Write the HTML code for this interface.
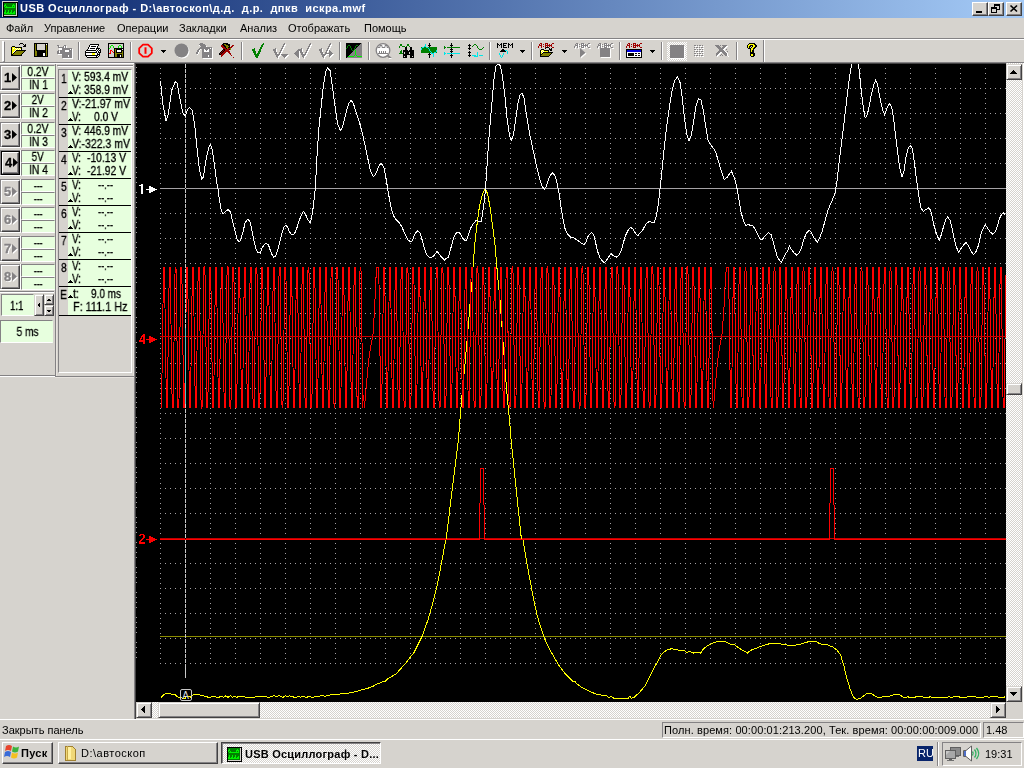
<!DOCTYPE html><html><head><meta charset="utf-8"><style>
*{box-sizing:border-box;margin:0;padding:0}
html,body{width:1024px;height:768px;overflow:hidden;background:#d6d3ce}
body{position:relative;font-family:"Liberation Sans",sans-serif;font-size:11px;color:#000}
.a{position:absolute}
.t{position:absolute;white-space:nowrap;line-height:1;will-change:transform}
#title{left:0;top:0;width:1024px;height:18px;background:linear-gradient(to right,#08246b 0%,#a5cbf7 100%)}
.cap{position:absolute;top:2px;height:14px;background:#d6d3ce;border:1px solid;border-color:#fff #424142 #424142 #fff;box-shadow:inset -1px -1px 0 #848284}
.hl{position:absolute;height:1px}
.vl{position:absolute;width:1px}
.btn{position:absolute;background:#d6d3ce;border:1px solid;border-color:#fff #424142 #424142 #fff;box-shadow:inset -1px -1px 0 #848284}
.sbtn{position:absolute;background:#d6d3ce;border:1px solid;border-color:#d6d3ce #424142 #424142 #d6d3ce;box-shadow:inset 1px 1px 0 #fff,inset -1px -1px 0 #848284}
.sunk{position:absolute;border:1px solid;border-color:#848284 #fff #fff #848284}
.gc{position:absolute;background:#e7ffde;border:1px solid;border-color:#848284 #e7ffde #fff #848284;text-align:center;font-size:11px;line-height:10px}
.chk{background:repeating-conic-gradient(#fff 0% 25%,#d6d3ce 0% 50%) 0 0/2px 2px}
.sep{position:absolute;top:42px;width:2px;height:18px;border-left:1px solid #848284;border-right:1px solid #fff}
svg{position:absolute;overflow:visible}
</style></head><body><div id="title" class="a"></div>
<svg style="left:0;top:0" width="20" height="18" shape-rendering="crispEdges"><rect x="2" y="1" width="16" height="1" fill="#d6d3ce"/><rect x="2" y="2" width="1" height="1" fill="#d6d3ce"/><rect x="3" y="2" width="15" height="1" fill="#000"/><rect x="2" y="3" width="1" height="1" fill="#d6d3ce"/><rect x="3" y="3" width="1" height="1" fill="#000"/><rect x="4" y="3" width="12" height="1" fill="#008000"/><rect x="16" y="3" width="1" height="1" fill="#d6d3ce"/><rect x="17" y="3" width="1" height="1" fill="#000"/><rect x="2" y="4" width="1" height="1" fill="#d6d3ce"/><rect x="3" y="4" width="1" height="1" fill="#000"/><rect x="4" y="4" width="1" height="1" fill="#008000"/><rect x="5" y="4" width="1" height="1" fill="#00f000"/><rect x="6" y="4" width="7" height="1" fill="#008000"/><rect x="13" y="4" width="1" height="1" fill="#00f000"/><rect x="14" y="4" width="2" height="1" fill="#008000"/><rect x="16" y="4" width="1" height="1" fill="#d6d3ce"/><rect x="17" y="4" width="1" height="1" fill="#000"/><rect x="2" y="5" width="1" height="1" fill="#d6d3ce"/><rect x="3" y="5" width="1" height="1" fill="#000"/><rect x="4" y="5" width="2" height="1" fill="#00f000"/><rect x="6" y="5" width="6" height="1" fill="#008000"/><rect x="12" y="5" width="3" height="1" fill="#00f000"/><rect x="15" y="5" width="1" height="1" fill="#008000"/><rect x="16" y="5" width="1" height="1" fill="#d6d3ce"/><rect x="17" y="5" width="1" height="1" fill="#000"/><rect x="2" y="6" width="1" height="1" fill="#d6d3ce"/><rect x="3" y="6" width="1" height="1" fill="#000"/><rect x="4" y="6" width="1" height="1" fill="#00f000"/><rect x="5" y="6" width="1" height="1" fill="#008000"/><rect x="6" y="6" width="1" height="1" fill="#00f000"/><rect x="7" y="6" width="5" height="1" fill="#008000"/><rect x="12" y="6" width="1" height="1" fill="#00f000"/><rect x="13" y="6" width="1" height="1" fill="#008000"/><rect x="14" y="6" width="1" height="1" fill="#00f000"/><rect x="15" y="6" width="1" height="1" fill="#008000"/><rect x="16" y="6" width="1" height="1" fill="#d6d3ce"/><rect x="17" y="6" width="1" height="1" fill="#000"/><rect x="2" y="7" width="1" height="1" fill="#d6d3ce"/><rect x="3" y="7" width="1" height="1" fill="#000"/><rect x="4" y="7" width="1" height="1" fill="#008000"/><rect x="5" y="7" width="10" height="1" fill="#00f000"/><rect x="15" y="7" width="1" height="1" fill="#008000"/><rect x="16" y="7" width="1" height="1" fill="#d6d3ce"/><rect x="17" y="7" width="1" height="1" fill="#000"/><rect x="2" y="8" width="1" height="1" fill="#d6d3ce"/><rect x="3" y="8" width="1" height="1" fill="#000"/><rect x="4" y="8" width="12" height="1" fill="#008000"/><rect x="16" y="8" width="1" height="1" fill="#d6d3ce"/><rect x="17" y="8" width="1" height="1" fill="#000"/><rect x="2" y="9" width="1" height="1" fill="#d6d3ce"/><rect x="3" y="9" width="1" height="1" fill="#000"/><rect x="4" y="9" width="12" height="1" fill="#008000"/><rect x="16" y="9" width="1" height="1" fill="#d6d3ce"/><rect x="17" y="9" width="1" height="1" fill="#000"/><rect x="2" y="10" width="1" height="1" fill="#d6d3ce"/><rect x="3" y="10" width="1" height="1" fill="#000"/><rect x="4" y="10" width="1" height="1" fill="#008000"/><rect x="5" y="10" width="1" height="1" fill="#00f000"/><rect x="6" y="10" width="2" height="1" fill="#008000"/><rect x="8" y="10" width="1" height="1" fill="#00f000"/><rect x="9" y="10" width="2" height="1" fill="#008000"/><rect x="11" y="10" width="1" height="1" fill="#00f000"/><rect x="12" y="10" width="4" height="1" fill="#008000"/><rect x="16" y="10" width="1" height="1" fill="#d6d3ce"/><rect x="17" y="10" width="1" height="1" fill="#000"/><rect x="2" y="11" width="1" height="1" fill="#d6d3ce"/><rect x="3" y="11" width="1" height="1" fill="#000"/><rect x="4" y="11" width="1" height="1" fill="#008000"/><rect x="5" y="11" width="1" height="1" fill="#00f000"/><rect x="6" y="11" width="2" height="1" fill="#008000"/><rect x="8" y="11" width="1" height="1" fill="#00f000"/><rect x="9" y="11" width="2" height="1" fill="#008000"/><rect x="11" y="11" width="1" height="1" fill="#00f000"/><rect x="12" y="11" width="2" height="1" fill="#008000"/><rect x="14" y="11" width="1" height="1" fill="#00f000"/><rect x="15" y="11" width="1" height="1" fill="#008000"/><rect x="16" y="11" width="1" height="1" fill="#d6d3ce"/><rect x="17" y="11" width="1" height="1" fill="#000"/><rect x="2" y="12" width="1" height="1" fill="#d6d3ce"/><rect x="3" y="12" width="1" height="1" fill="#000"/><rect x="4" y="12" width="2" height="1" fill="#00f000"/><rect x="6" y="12" width="1" height="1" fill="#008000"/><rect x="7" y="12" width="2" height="1" fill="#00f000"/><rect x="9" y="12" width="1" height="1" fill="#008000"/><rect x="10" y="12" width="2" height="1" fill="#00f000"/><rect x="12" y="12" width="1" height="1" fill="#008000"/><rect x="13" y="12" width="2" height="1" fill="#00f000"/><rect x="15" y="12" width="1" height="1" fill="#008000"/><rect x="16" y="12" width="1" height="1" fill="#d6d3ce"/><rect x="17" y="12" width="1" height="1" fill="#000"/><rect x="2" y="13" width="1" height="1" fill="#d6d3ce"/><rect x="3" y="13" width="1" height="1" fill="#000"/><rect x="4" y="13" width="11" height="1" fill="#00f000"/><rect x="15" y="13" width="1" height="1" fill="#008000"/><rect x="16" y="13" width="1" height="1" fill="#d6d3ce"/><rect x="17" y="13" width="1" height="1" fill="#000"/><rect x="2" y="14" width="1" height="1" fill="#d6d3ce"/><rect x="3" y="14" width="1" height="1" fill="#000"/><rect x="4" y="14" width="12" height="1" fill="#008000"/><rect x="16" y="14" width="1" height="1" fill="#d6d3ce"/><rect x="17" y="14" width="1" height="1" fill="#000"/><rect x="2" y="15" width="1" height="1" fill="#d6d3ce"/><rect x="3" y="15" width="1" height="1" fill="#000"/><rect x="4" y="15" width="13" height="1" fill="#d6d3ce"/><rect x="17" y="15" width="1" height="1" fill="#000"/><rect x="2" y="16" width="1" height="1" fill="#d6d3ce"/><rect x="3" y="16" width="15" height="1" fill="#000"/></svg>
<div class="t" style="left:20px;top:3px;color:#fff;font-weight:bold;font-size:11px;letter-spacing:0.46px" id="ttl">USB Осциллограф - D:\автоскоп\д.д.&nbsp; д.р.&nbsp; дпкв&nbsp; искра.mwf</div>
<div class="cap" style="left:972px;width:16px"></div><div class="cap" style="left:988px;width:16px"></div><div class="cap" style="left:1006px;width:16px"></div>
<svg style="left:972px;top:2px" width="50" height="14" shape-rendering="crispEdges">
<rect x="4" y="9" width="6" height="2" fill="#000"/>
<rect x="22.500" y="2.500" width="5" height="5" fill="none" stroke="#000"/><rect x="22" y="2" width="6" height="2" fill="#000"/>
<rect x="19.500" y="5.500" width="5" height="5" fill="#d6d3ce" stroke="#000"/><rect x="19" y="5" width="6" height="2" fill="#000"/>
<path d="M38.500 3.500l6.500 6M45 3.500l-6.500 6" stroke="#000" stroke-width="1.700" shape-rendering="auto"/>
</svg>
<div class="t mn" id="mn0" style="left:5.5px;top:23px;font-size:11px">Файл</div>
<div class="t mn" id="mn1" style="left:43.7px;top:23px;font-size:11px">Управление</div>
<div class="t mn" id="mn2" style="left:116.9px;top:23px;font-size:11px">Операции</div>
<div class="t mn" id="mn3" style="left:178.8px;top:23px;font-size:11px">Закладки</div>
<div class="t mn" id="mn4" style="left:239.5px;top:23px;font-size:11px">Анализ</div>
<div class="t mn" id="mn5" style="left:287.5px;top:23px;font-size:11px">Отображать</div>
<div class="t mn" id="mn6" style="left:363.5px;top:23px;font-size:11px">Помощь</div>
<div class="hl" style="left:0;top:38px;width:1024px;background:#848284"></div>
<div class="hl" style="left:0;top:39px;width:1024px;background:#fff"></div>
<div class="a" style="left:2px;top:41px;width:3px;height:21px;border:1px solid;border-color:#fff #848284 #848284 #fff;border-left-width:2px;width:3px"></div>
<div class="sep" style="left:78px"></div>
<div class="sep" style="left:130px"></div>
<div class="sep" style="left:241px"></div>
<div class="sep" style="left:339px"></div>
<div class="sep" style="left:368px"></div>
<div class="sep" style="left:489px"></div>
<div class="sep" style="left:531px"></div>
<div class="sep" style="left:619px"></div>
<div class="sep" style="left:661px"></div>
<div class="sep" style="left:736px"></div>
<div class="a chk" style="left:667px;top:42px;width:20px;height:19px"></div>
<div class="vl" style="left:763px;top:40px;height:22px;background:#848284"></div><div class="vl" style="left:764px;top:40px;height:22px;background:#fff"></div>
<svg style="left:0;top:0" width="1024" height="64" viewBox="0 0 1024 64" shape-rendering="crispEdges"><rect x="20" y="43" width="3" height="1" fill="#000"/><rect x="19" y="44" width="1" height="1" fill="#000"/><rect x="23" y="44" width="1" height="1" fill="#000"/><rect x="25" y="44" width="1" height="1" fill="#000"/><rect x="24" y="45" width="2" height="1" fill="#000"/><rect x="12" y="46" width="3" height="1" fill="#000"/><rect x="23" y="46" width="3" height="1" fill="#000"/><rect x="11" y="47" width="1" height="1" fill="#000"/><rect x="12" y="47" width="3" height="1" fill="#ffff00"/><rect x="15" y="47" width="7" height="1" fill="#000"/><rect x="11" y="48" width="1" height="1" fill="#000"/><rect x="12" y="48" width="1" height="1" fill="#ffff00"/><rect x="13" y="48" width="1" height="1" fill="#fff"/><rect x="14" y="48" width="1" height="1" fill="#ffff00"/><rect x="15" y="48" width="1" height="1" fill="#fff"/><rect x="16" y="48" width="1" height="1" fill="#ffff00"/><rect x="17" y="48" width="1" height="1" fill="#fff"/><rect x="18" y="48" width="1" height="1" fill="#ffff00"/><rect x="19" y="48" width="1" height="1" fill="#fff"/><rect x="20" y="48" width="1" height="1" fill="#ffff00"/><rect x="21" y="48" width="1" height="1" fill="#000"/><rect x="11" y="49" width="1" height="1" fill="#000"/><rect x="12" y="49" width="4" height="1" fill="#ffff00"/><rect x="16" y="49" width="1" height="1" fill="#fff"/><rect x="17" y="49" width="1" height="1" fill="#ffff00"/><rect x="18" y="49" width="1" height="1" fill="#fff"/><rect x="19" y="49" width="1" height="1" fill="#ffff00"/><rect x="20" y="49" width="1" height="1" fill="#fff"/><rect x="21" y="49" width="1" height="1" fill="#000"/><rect x="11" y="50" width="1" height="1" fill="#000"/><rect x="12" y="50" width="3" height="1" fill="#ffff00"/><rect x="15" y="50" width="1" height="1" fill="#fff"/><rect x="16" y="50" width="10" height="1" fill="#000"/><rect x="11" y="51" width="1" height="1" fill="#000"/><rect x="12" y="51" width="2" height="1" fill="#ffff00"/><rect x="14" y="51" width="1" height="1" fill="#fff"/><rect x="15" y="51" width="1" height="1" fill="#000"/><rect x="16" y="51" width="8" height="1" fill="#808000"/><rect x="24" y="51" width="1" height="1" fill="#000"/><rect x="11" y="52" width="1" height="1" fill="#000"/><rect x="12" y="52" width="1" height="1" fill="#ffff00"/><rect x="13" y="52" width="1" height="1" fill="#fff"/><rect x="14" y="52" width="1" height="1" fill="#000"/><rect x="15" y="52" width="8" height="1" fill="#808000"/><rect x="23" y="52" width="1" height="1" fill="#000"/><rect x="11" y="53" width="1" height="1" fill="#000"/><rect x="12" y="53" width="1" height="1" fill="#ffff00"/><rect x="13" y="53" width="1" height="1" fill="#000"/><rect x="14" y="53" width="8" height="1" fill="#808000"/><rect x="22" y="53" width="1" height="1" fill="#000"/><rect x="11" y="54" width="2" height="1" fill="#000"/><rect x="13" y="54" width="8" height="1" fill="#808000"/><rect x="21" y="54" width="1" height="1" fill="#000"/><rect x="11" y="55" width="11" height="1" fill="#000"/><g transform="translate(34,43)"><rect x="0" y="0" width="14" height="14" fill="#000"/><rect x="1" y="1" width="12" height="12" fill="#808000"/><rect x="3" y="1" width="8" height="6" fill="#d6d3ce" stroke="none"/><path d="M2.5 0.5v6.5h9v-6.5" fill="none" stroke="#000"/><rect x="3" y="8" width="9" height="5" fill="#000"/><rect x="9" y="10" width="2" height="3" fill="#fff"/><rect x="12" y="1" width="1" height="1" fill="#fff"/></g><rect x="57" y="45" width="2" height="1" fill="#848284"/><rect x="64" y="45" width="2" height="1" fill="#848284"/><rect x="58" y="46" width="1" height="1" fill="#848284"/><rect x="59" y="46" width="1" height="1" fill="#fff"/><rect x="63" y="46" width="1" height="1" fill="#848284"/><rect x="64" y="46" width="1" height="1" fill="#fff"/><rect x="65" y="46" width="1" height="1" fill="#848284"/><rect x="66" y="46" width="1" height="1" fill="#fff"/><rect x="58" y="47" width="6" height="1" fill="#848284"/><rect x="64" y="47" width="1" height="1" fill="#fff"/><rect x="65" y="47" width="1" height="1" fill="#848284"/><rect x="66" y="47" width="1" height="1" fill="#fff"/><rect x="59" y="48" width="3" height="1" fill="#fff"/><rect x="62" y="48" width="10" height="1" fill="#848284"/><rect x="59" y="49" width="3" height="1" fill="#fff"/><rect x="62" y="49" width="8" height="1" fill="#848284"/><rect x="70" y="49" width="1" height="1" fill="#fff"/><rect x="71" y="49" width="1" height="1" fill="#848284"/><rect x="72" y="49" width="1" height="1" fill="#fff"/><rect x="58" y="50" width="1" height="1" fill="#848284"/><rect x="60" y="50" width="5" height="1" fill="#848284"/><rect x="65" y="50" width="4" height="1" fill="#fff"/><rect x="69" y="50" width="3" height="1" fill="#848284"/><rect x="72" y="50" width="1" height="1" fill="#fff"/><rect x="57" y="51" width="2" height="1" fill="#848284"/><rect x="59" y="51" width="1" height="1" fill="#fff"/><rect x="60" y="51" width="5" height="1" fill="#848284"/><rect x="65" y="51" width="4" height="1" fill="#fff"/><rect x="69" y="51" width="3" height="1" fill="#848284"/><rect x="72" y="51" width="1" height="1" fill="#fff"/><rect x="57" y="52" width="2" height="1" fill="#848284"/><rect x="59" y="52" width="1" height="1" fill="#fff"/><rect x="60" y="52" width="12" height="1" fill="#848284"/><rect x="72" y="52" width="1" height="1" fill="#fff"/><rect x="57" y="53" width="15" height="1" fill="#848284"/><rect x="72" y="53" width="1" height="1" fill="#fff"/><rect x="58" y="54" width="4" height="1" fill="#fff"/><rect x="62" y="54" width="10" height="1" fill="#848284"/><rect x="72" y="54" width="1" height="1" fill="#fff"/><rect x="62" y="55" width="6" height="1" fill="#848284"/><rect x="68" y="55" width="1" height="1" fill="#fff"/><rect x="69" y="55" width="3" height="1" fill="#848284"/><rect x="72" y="55" width="1" height="1" fill="#fff"/><rect x="62" y="56" width="6" height="1" fill="#848284"/><rect x="68" y="56" width="1" height="1" fill="#fff"/><rect x="69" y="56" width="3" height="1" fill="#848284"/><rect x="72" y="56" width="1" height="1" fill="#fff"/><rect x="62" y="57" width="10" height="1" fill="#848284"/><rect x="72" y="57" width="1" height="1" fill="#fff"/><rect x="63" y="58" width="10" height="1" fill="#fff"/><rect x="90" y="44" width="9" height="1" fill="#000"/><rect x="89" y="45" width="1" height="1" fill="#000"/><rect x="90" y="45" width="8" height="1" fill="#fff"/><rect x="98" y="45" width="1" height="1" fill="#000"/><rect x="89" y="46" width="1" height="1" fill="#000"/><rect x="90" y="46" width="1" height="1" fill="#fff"/><rect x="91" y="46" width="5" height="1" fill="#000"/><rect x="96" y="46" width="1" height="1" fill="#fff"/><rect x="97" y="46" width="1" height="1" fill="#000"/><rect x="88" y="47" width="1" height="1" fill="#000"/><rect x="89" y="47" width="8" height="1" fill="#fff"/><rect x="97" y="47" width="1" height="1" fill="#000"/><rect x="88" y="48" width="1" height="1" fill="#000"/><rect x="89" y="48" width="1" height="1" fill="#fff"/><rect x="90" y="48" width="5" height="1" fill="#000"/><rect x="95" y="48" width="1" height="1" fill="#fff"/><rect x="96" y="48" width="4" height="1" fill="#000"/><rect x="87" y="49" width="1" height="1" fill="#000"/><rect x="88" y="49" width="8" height="1" fill="#fff"/><rect x="96" y="49" width="1" height="1" fill="#000"/><rect x="97" y="49" width="1" height="1" fill="#fff"/><rect x="98" y="49" width="1" height="1" fill="#000"/><rect x="99" y="49" width="1" height="1" fill="#fff"/><rect x="100" y="49" width="1" height="1" fill="#000"/><rect x="86" y="50" width="10" height="1" fill="#000"/><rect x="96" y="50" width="1" height="1" fill="#fff"/><rect x="97" y="50" width="1" height="1" fill="#000"/><rect x="98" y="50" width="1" height="1" fill="#fff"/><rect x="99" y="50" width="2" height="1" fill="#000"/><rect x="85" y="51" width="1" height="1" fill="#000"/><rect x="86" y="51" width="10" height="1" fill="#fff"/><rect x="96" y="51" width="1" height="1" fill="#000"/><rect x="97" y="51" width="1" height="1" fill="#fff"/><rect x="98" y="51" width="1" height="1" fill="#000"/><rect x="99" y="51" width="1" height="1" fill="#fff"/><rect x="100" y="51" width="1" height="1" fill="#000"/><rect x="85" y="52" width="12" height="1" fill="#000"/><rect x="97" y="52" width="1" height="1" fill="#fff"/><rect x="98" y="52" width="3" height="1" fill="#000"/><rect x="85" y="53" width="1" height="1" fill="#000"/><rect x="86" y="53" width="6" height="1" fill="#fff"/><rect x="92" y="53" width="3" height="1" fill="#ffff00"/><rect x="95" y="53" width="2" height="1" fill="#fff"/><rect x="97" y="53" width="1" height="1" fill="#000"/><rect x="98" y="53" width="1" height="1" fill="#fff"/><rect x="99" y="53" width="1" height="1" fill="#000"/><rect x="85" y="54" width="1" height="1" fill="#000"/><rect x="86" y="54" width="6" height="1" fill="#fff"/><rect x="92" y="54" width="3" height="1" fill="#ffff00"/><rect x="95" y="54" width="2" height="1" fill="#fff"/><rect x="97" y="54" width="3" height="1" fill="#000"/><rect x="85" y="55" width="13" height="1" fill="#000"/><rect x="98" y="55" width="1" height="1" fill="#fff"/><rect x="99" y="55" width="1" height="1" fill="#000"/><rect x="86" y="56" width="1" height="1" fill="#000"/><rect x="87" y="56" width="9" height="1" fill="#fff"/><rect x="96" y="56" width="1" height="1" fill="#000"/><rect x="97" y="56" width="1" height="1" fill="#fff"/><rect x="98" y="56" width="1" height="1" fill="#000"/><rect x="87" y="57" width="11" height="1" fill="#000"/><rect x="108" y="43" width="16" height="1" fill="#000"/><rect x="108" y="44" width="1" height="1" fill="#000"/><rect x="109" y="44" width="14" height="1" fill="#d6d3ce"/><rect x="123" y="44" width="1" height="1" fill="#000"/><rect x="108" y="45" width="1" height="1" fill="#000"/><rect x="109" y="45" width="2" height="1" fill="#d6d3ce"/><rect x="111" y="45" width="2" height="1" fill="#00f000"/><rect x="113" y="45" width="6" height="1" fill="#d6d3ce"/><rect x="119" y="45" width="2" height="1" fill="#00f000"/><rect x="121" y="45" width="2" height="1" fill="#d6d3ce"/><rect x="123" y="45" width="1" height="1" fill="#000"/><rect x="108" y="46" width="1" height="1" fill="#000"/><rect x="109" y="46" width="1" height="1" fill="#d6d3ce"/><rect x="110" y="46" width="1" height="1" fill="#00f000"/><rect x="111" y="46" width="2" height="1" fill="#d6d3ce"/><rect x="113" y="46" width="1" height="1" fill="#00f000"/><rect x="114" y="46" width="4" height="1" fill="#d6d3ce"/><rect x="118" y="46" width="1" height="1" fill="#00f000"/><rect x="119" y="46" width="2" height="1" fill="#d6d3ce"/><rect x="121" y="46" width="1" height="1" fill="#00f000"/><rect x="122" y="46" width="1" height="1" fill="#d6d3ce"/><rect x="123" y="46" width="1" height="1" fill="#000"/><rect x="108" y="47" width="1" height="1" fill="#000"/><rect x="109" y="47" width="1" height="1" fill="#d6d3ce"/><rect x="110" y="47" width="1" height="1" fill="#00f000"/><rect x="111" y="47" width="2" height="1" fill="#d6d3ce"/><rect x="113" y="47" width="1" height="1" fill="#00f000"/><rect x="114" y="47" width="4" height="1" fill="#d6d3ce"/><rect x="118" y="47" width="1" height="1" fill="#00f000"/><rect x="119" y="47" width="2" height="1" fill="#d6d3ce"/><rect x="121" y="47" width="1" height="1" fill="#00f000"/><rect x="122" y="47" width="1" height="1" fill="#d6d3ce"/><rect x="123" y="47" width="1" height="1" fill="#000"/><rect x="108" y="48" width="1" height="1" fill="#000"/><rect x="109" y="48" width="1" height="1" fill="#00f000"/><rect x="110" y="48" width="4" height="1" fill="#d6d3ce"/><rect x="114" y="48" width="10" height="1" fill="#000"/><rect x="108" y="49" width="1" height="1" fill="#000"/><rect x="109" y="49" width="5" height="1" fill="#d6d3ce"/><rect x="114" y="49" width="1" height="1" fill="#000"/><rect x="115" y="49" width="1" height="1" fill="#808000"/><rect x="116" y="49" width="6" height="1" fill="#000"/><rect x="122" y="49" width="1" height="1" fill="#fff"/><rect x="123" y="49" width="1" height="1" fill="#000"/><rect x="108" y="50" width="1" height="1" fill="#000"/><rect x="109" y="50" width="1" height="1" fill="#d6d3ce"/><rect x="110" y="50" width="2" height="1" fill="#ff0000"/><rect x="112" y="50" width="2" height="1" fill="#d6d3ce"/><rect x="114" y="50" width="1" height="1" fill="#000"/><rect x="115" y="50" width="1" height="1" fill="#808000"/><rect x="116" y="50" width="1" height="1" fill="#000"/><rect x="117" y="50" width="4" height="1" fill="#fff"/><rect x="121" y="50" width="3" height="1" fill="#000"/><rect x="108" y="51" width="1" height="1" fill="#000"/><rect x="109" y="51" width="1" height="1" fill="#d6d3ce"/><rect x="110" y="51" width="1" height="1" fill="#ff0000"/><rect x="111" y="51" width="1" height="1" fill="#d6d3ce"/><rect x="112" y="51" width="1" height="1" fill="#ff0000"/><rect x="113" y="51" width="1" height="1" fill="#d6d3ce"/><rect x="114" y="51" width="1" height="1" fill="#000"/><rect x="115" y="51" width="1" height="1" fill="#808000"/><rect x="116" y="51" width="1" height="1" fill="#000"/><rect x="117" y="51" width="4" height="1" fill="#fff"/><rect x="121" y="51" width="1" height="1" fill="#000"/><rect x="122" y="51" width="1" height="1" fill="#808000"/><rect x="123" y="51" width="1" height="1" fill="#000"/><rect x="108" y="52" width="1" height="1" fill="#000"/><rect x="109" y="52" width="1" height="1" fill="#d6d3ce"/><rect x="110" y="52" width="1" height="1" fill="#ff0000"/><rect x="111" y="52" width="2" height="1" fill="#d6d3ce"/><rect x="113" y="52" width="1" height="1" fill="#ff0000"/><rect x="114" y="52" width="1" height="1" fill="#000"/><rect x="115" y="52" width="1" height="1" fill="#808000"/><rect x="116" y="52" width="6" height="1" fill="#000"/><rect x="122" y="52" width="1" height="1" fill="#808000"/><rect x="123" y="52" width="1" height="1" fill="#000"/><rect x="108" y="53" width="1" height="1" fill="#000"/><rect x="109" y="53" width="2" height="1" fill="#ff0000"/><rect x="111" y="53" width="3" height="1" fill="#d6d3ce"/><rect x="114" y="53" width="1" height="1" fill="#000"/><rect x="115" y="53" width="8" height="1" fill="#808000"/><rect x="123" y="53" width="1" height="1" fill="#000"/><rect x="108" y="54" width="1" height="1" fill="#000"/><rect x="109" y="54" width="5" height="1" fill="#d6d3ce"/><rect x="114" y="54" width="1" height="1" fill="#000"/><rect x="115" y="54" width="2" height="1" fill="#808000"/><rect x="117" y="54" width="5" height="1" fill="#000"/><rect x="122" y="54" width="1" height="1" fill="#808000"/><rect x="123" y="54" width="1" height="1" fill="#000"/><rect x="108" y="55" width="1" height="1" fill="#000"/><rect x="109" y="55" width="5" height="1" fill="#d6d3ce"/><rect x="114" y="55" width="1" height="1" fill="#000"/><rect x="115" y="55" width="2" height="1" fill="#808000"/><rect x="117" y="55" width="3" height="1" fill="#000"/><rect x="120" y="55" width="1" height="1" fill="#fff"/><rect x="121" y="55" width="1" height="1" fill="#000"/><rect x="122" y="55" width="1" height="1" fill="#808000"/><rect x="123" y="55" width="1" height="1" fill="#000"/><rect x="108" y="56" width="1" height="1" fill="#000"/><rect x="109" y="56" width="5" height="1" fill="#d6d3ce"/><rect x="114" y="56" width="1" height="1" fill="#000"/><rect x="115" y="56" width="2" height="1" fill="#808000"/><rect x="117" y="56" width="3" height="1" fill="#000"/><rect x="120" y="56" width="1" height="1" fill="#fff"/><rect x="121" y="56" width="1" height="1" fill="#000"/><rect x="122" y="56" width="1" height="1" fill="#808000"/><rect x="123" y="56" width="1" height="1" fill="#000"/><rect x="108" y="57" width="16" height="1" fill="#000"/><g shape-rendering="auto"><path d="M143 44.700h5l3.800 3.600v4.800l-3.800 3.600h-5l-3.800-3.600v-4.800z" fill="none" stroke="#ff0000" stroke-width="1.800" stroke-linejoin="round"/><rect x="144.500" y="47.300" width="2" height="6.500" fill="#ff0000"/></g><path d="M161 50h5v1h-1v1h-1v1h-1v-1h-1v-1h-1z" fill="#000"/><g shape-rendering="auto"><circle cx="182.500" cy="51.500" r="7" fill="#fff"/><circle cx="181.500" cy="50.500" r="7" fill="#848284"/></g><rect x="200" y="43" width="3" height="1" fill="#848284"/><rect x="199" y="44" width="6" height="1" fill="#848284"/><rect x="199" y="45" width="1" height="1" fill="#fff"/><rect x="200" y="45" width="6" height="1" fill="#848284"/><rect x="201" y="46" width="5" height="1" fill="#848284"/><rect x="206" y="46" width="1" height="1" fill="#fff"/><rect x="200" y="47" width="12" height="1" fill="#848284"/><rect x="199" y="48" width="11" height="1" fill="#848284"/><rect x="210" y="48" width="1" height="1" fill="#fff"/><rect x="211" y="48" width="1" height="1" fill="#848284"/><rect x="212" y="48" width="1" height="1" fill="#fff"/><rect x="198" y="49" width="2" height="1" fill="#848284"/><rect x="200" y="49" width="1" height="1" fill="#fff"/><rect x="202" y="49" width="2" height="1" fill="#848284"/><rect x="204" y="49" width="1" height="1" fill="#fff"/><rect x="205" y="49" width="3" height="1" fill="#848284"/><rect x="208" y="49" width="1" height="1" fill="#fff"/><rect x="209" y="49" width="3" height="1" fill="#848284"/><rect x="212" y="49" width="1" height="1" fill="#fff"/><rect x="197" y="50" width="2" height="1" fill="#848284"/><rect x="199" y="50" width="1" height="1" fill="#fff"/><rect x="202" y="50" width="2" height="1" fill="#848284"/><rect x="204" y="50" width="2" height="1" fill="#fff"/><rect x="206" y="50" width="1" height="1" fill="#848284"/><rect x="207" y="50" width="2" height="1" fill="#fff"/><rect x="209" y="50" width="3" height="1" fill="#848284"/><rect x="212" y="50" width="1" height="1" fill="#fff"/><rect x="197" y="51" width="2" height="1" fill="#848284"/><rect x="199" y="51" width="1" height="1" fill="#fff"/><rect x="202" y="51" width="2" height="1" fill="#848284"/><rect x="204" y="51" width="5" height="1" fill="#fff"/><rect x="209" y="51" width="3" height="1" fill="#848284"/><rect x="212" y="51" width="1" height="1" fill="#fff"/><rect x="196" y="52" width="2" height="1" fill="#848284"/><rect x="198" y="52" width="1" height="1" fill="#fff"/><rect x="202" y="52" width="10" height="1" fill="#848284"/><rect x="212" y="52" width="1" height="1" fill="#fff"/><rect x="196" y="53" width="2" height="1" fill="#848284"/><rect x="198" y="53" width="1" height="1" fill="#fff"/><rect x="202" y="53" width="10" height="1" fill="#848284"/><rect x="212" y="53" width="1" height="1" fill="#fff"/><rect x="197" y="54" width="1" height="1" fill="#fff"/><rect x="202" y="54" width="10" height="1" fill="#848284"/><rect x="212" y="54" width="1" height="1" fill="#fff"/><rect x="202" y="55" width="6" height="1" fill="#848284"/><rect x="208" y="55" width="1" height="1" fill="#fff"/><rect x="209" y="55" width="3" height="1" fill="#848284"/><rect x="212" y="55" width="1" height="1" fill="#fff"/><rect x="202" y="56" width="6" height="1" fill="#848284"/><rect x="208" y="56" width="1" height="1" fill="#fff"/><rect x="209" y="56" width="3" height="1" fill="#848284"/><rect x="212" y="56" width="1" height="1" fill="#fff"/><rect x="202" y="57" width="10" height="1" fill="#848284"/><rect x="212" y="57" width="1" height="1" fill="#fff"/><rect x="203" y="58" width="10" height="1" fill="#fff"/><rect x="223" y="43" width="5" height="1" fill="#000"/><rect x="222" y="44" width="2" height="1" fill="#000"/><rect x="224" y="44" width="2" height="1" fill="#808000"/><rect x="226" y="44" width="4" height="1" fill="#000"/><rect x="221" y="45" width="2" height="1" fill="#a00000"/><rect x="223" y="45" width="2" height="1" fill="#000"/><rect x="225" y="45" width="3" height="1" fill="#808000"/><rect x="228" y="45" width="2" height="1" fill="#000"/><rect x="232" y="45" width="2" height="1" fill="#a00000"/><rect x="221" y="46" width="3" height="1" fill="#a00000"/><rect x="224" y="46" width="2" height="1" fill="#000"/><rect x="226" y="46" width="3" height="1" fill="#808000"/><rect x="229" y="46" width="1" height="1" fill="#000"/><rect x="231" y="46" width="2" height="1" fill="#a00000"/><rect x="222" y="47" width="3" height="1" fill="#a00000"/><rect x="225" y="47" width="1" height="1" fill="#000"/><rect x="226" y="47" width="2" height="1" fill="#808000"/><rect x="228" y="47" width="2" height="1" fill="#000"/><rect x="230" y="47" width="2" height="1" fill="#a00000"/><rect x="223" y="48" width="3" height="1" fill="#a00000"/><rect x="226" y="48" width="1" height="1" fill="#000"/><rect x="227" y="48" width="1" height="1" fill="#808000"/><rect x="228" y="48" width="2" height="1" fill="#a00000"/><rect x="230" y="48" width="1" height="1" fill="#808000"/><rect x="223" y="49" width="2" height="1" fill="#000"/><rect x="225" y="49" width="4" height="1" fill="#a00000"/><rect x="229" y="49" width="1" height="1" fill="#000"/><rect x="230" y="49" width="1" height="1" fill="#808000"/><rect x="222" y="50" width="1" height="1" fill="#000"/><rect x="223" y="50" width="1" height="1" fill="#a00000"/><rect x="224" y="50" width="1" height="1" fill="#000"/><rect x="225" y="50" width="4" height="1" fill="#a00000"/><rect x="221" y="51" width="1" height="1" fill="#000"/><rect x="222" y="51" width="1" height="1" fill="#a00000"/><rect x="223" y="51" width="1" height="1" fill="#000"/><rect x="224" y="51" width="6" height="1" fill="#a00000"/><rect x="220" y="52" width="1" height="1" fill="#000"/><rect x="221" y="52" width="1" height="1" fill="#a00000"/><rect x="222" y="52" width="1" height="1" fill="#000"/><rect x="223" y="52" width="3" height="1" fill="#a00000"/><rect x="228" y="52" width="2" height="1" fill="#a00000"/><rect x="219" y="53" width="1" height="1" fill="#000"/><rect x="220" y="53" width="1" height="1" fill="#a00000"/><rect x="221" y="53" width="1" height="1" fill="#000"/><rect x="222" y="53" width="3" height="1" fill="#a00000"/><rect x="229" y="53" width="2" height="1" fill="#a00000"/><rect x="219" y="54" width="2" height="1" fill="#000"/><rect x="221" y="54" width="3" height="1" fill="#a00000"/><rect x="230" y="54" width="1" height="1" fill="#a00000"/><rect x="221" y="55" width="2" height="1" fill="#a00000"/><rect x="231" y="55" width="1" height="1" fill="#a00000"/><rect x="221" y="56" width="1" height="1" fill="#a00000"/><rect x="233" y="57" width="1" height="1" fill="#a00000"/><rect x="263" y="43" width="1" height="1" fill="#008000"/><rect x="262" y="44" width="2" height="1" fill="#008000"/><rect x="261" y="45" width="2" height="1" fill="#008000"/><rect x="261" y="46" width="2" height="1" fill="#008000"/><rect x="260" y="47" width="2" height="1" fill="#008000"/><rect x="254" y="48" width="1" height="1" fill="#008000"/><rect x="260" y="48" width="2" height="1" fill="#008000"/><rect x="252" y="49" width="3" height="1" fill="#008000"/><rect x="259" y="49" width="2" height="1" fill="#008000"/><rect x="252" y="50" width="3" height="1" fill="#008000"/><rect x="259" y="50" width="2" height="1" fill="#008000"/><rect x="253" y="51" width="3" height="1" fill="#008000"/><rect x="258" y="51" width="3" height="1" fill="#008000"/><rect x="253" y="52" width="3" height="1" fill="#008000"/><rect x="258" y="52" width="2" height="1" fill="#008000"/><rect x="254" y="53" width="2" height="1" fill="#008000"/><rect x="257" y="53" width="3" height="1" fill="#008000"/><rect x="254" y="54" width="5" height="1" fill="#008000"/><rect x="255" y="55" width="4" height="1" fill="#008000"/><rect x="255" y="56" width="3" height="1" fill="#008000"/><rect x="256" y="57" width="2" height="1" fill="#008000"/><rect x="285" y="44" width="1" height="1" fill="#fff"/><rect x="284" y="45" width="2" height="1" fill="#fff"/><rect x="284" y="46" width="1" height="1" fill="#fff"/><rect x="283" y="47" width="2" height="1" fill="#fff"/><rect x="283" y="48" width="1" height="1" fill="#fff"/><rect x="276" y="49" width="1" height="1" fill="#fff"/><rect x="282" y="49" width="2" height="1" fill="#fff"/><rect x="274" y="50" width="3" height="1" fill="#fff"/><rect x="282" y="50" width="1" height="1" fill="#fff"/><rect x="274" y="51" width="3" height="1" fill="#fff"/><rect x="281" y="51" width="2" height="1" fill="#fff"/><rect x="275" y="52" width="2" height="1" fill="#fff"/><rect x="281" y="52" width="1" height="1" fill="#fff"/><rect x="275" y="53" width="3" height="1" fill="#fff"/><rect x="280" y="53" width="2" height="1" fill="#fff"/><rect x="276" y="54" width="2" height="1" fill="#fff"/><rect x="280" y="54" width="1" height="1" fill="#fff"/><rect x="276" y="55" width="5" height="1" fill="#fff"/><rect x="277" y="56" width="3" height="1" fill="#fff"/><rect x="277" y="57" width="2" height="1" fill="#fff"/><rect x="278" y="58" width="1" height="1" fill="#fff"/><rect x="282" y="55" width="7" height="1" fill="#fff"/><rect x="283" y="56" width="5" height="1" fill="#fff"/><rect x="284" y="57" width="3" height="1" fill="#fff"/><rect x="285" y="58" width="1" height="1" fill="#fff"/><rect x="284" y="43" width="1" height="1" fill="#848284"/><rect x="283" y="44" width="2" height="1" fill="#848284"/><rect x="283" y="45" width="1" height="1" fill="#848284"/><rect x="282" y="46" width="2" height="1" fill="#848284"/><rect x="282" y="47" width="1" height="1" fill="#848284"/><rect x="275" y="48" width="1" height="1" fill="#848284"/><rect x="281" y="48" width="2" height="1" fill="#848284"/><rect x="273" y="49" width="3" height="1" fill="#848284"/><rect x="281" y="49" width="1" height="1" fill="#848284"/><rect x="273" y="50" width="3" height="1" fill="#848284"/><rect x="280" y="50" width="2" height="1" fill="#848284"/><rect x="274" y="51" width="2" height="1" fill="#848284"/><rect x="280" y="51" width="1" height="1" fill="#848284"/><rect x="274" y="52" width="3" height="1" fill="#848284"/><rect x="279" y="52" width="2" height="1" fill="#848284"/><rect x="275" y="53" width="2" height="1" fill="#848284"/><rect x="279" y="53" width="1" height="1" fill="#848284"/><rect x="275" y="54" width="5" height="1" fill="#848284"/><rect x="276" y="55" width="3" height="1" fill="#848284"/><rect x="276" y="56" width="2" height="1" fill="#848284"/><rect x="277" y="57" width="1" height="1" fill="#848284"/><rect x="281" y="54" width="7" height="1" fill="#848284"/><rect x="282" y="55" width="5" height="1" fill="#848284"/><rect x="283" y="56" width="3" height="1" fill="#848284"/><rect x="284" y="57" width="1" height="1" fill="#848284"/><rect x="311" y="44" width="1" height="1" fill="#fff"/><rect x="310" y="45" width="2" height="1" fill="#fff"/><rect x="310" y="46" width="1" height="1" fill="#fff"/><rect x="309" y="47" width="2" height="1" fill="#fff"/><rect x="309" y="48" width="1" height="1" fill="#fff"/><rect x="302" y="49" width="1" height="1" fill="#fff"/><rect x="308" y="49" width="2" height="1" fill="#fff"/><rect x="300" y="50" width="3" height="1" fill="#fff"/><rect x="308" y="50" width="1" height="1" fill="#fff"/><rect x="300" y="51" width="3" height="1" fill="#fff"/><rect x="307" y="51" width="2" height="1" fill="#fff"/><rect x="301" y="52" width="2" height="1" fill="#fff"/><rect x="307" y="52" width="1" height="1" fill="#fff"/><rect x="301" y="53" width="3" height="1" fill="#fff"/><rect x="306" y="53" width="2" height="1" fill="#fff"/><rect x="302" y="54" width="2" height="1" fill="#fff"/><rect x="306" y="54" width="1" height="1" fill="#fff"/><rect x="302" y="55" width="5" height="1" fill="#fff"/><rect x="303" y="56" width="3" height="1" fill="#fff"/><rect x="303" y="57" width="2" height="1" fill="#fff"/><rect x="304" y="58" width="1" height="1" fill="#fff"/><rect x="299" y="50" width="1" height="1" fill="#fff"/><rect x="298" y="51" width="2" height="1" fill="#fff"/><rect x="297" y="52" width="3" height="1" fill="#fff"/><rect x="296" y="53" width="4" height="1" fill="#fff"/><rect x="295" y="54" width="5" height="1" fill="#fff"/><rect x="296" y="55" width="4" height="1" fill="#fff"/><rect x="297" y="56" width="3" height="1" fill="#fff"/><rect x="298" y="57" width="2" height="1" fill="#fff"/><rect x="299" y="58" width="1" height="1" fill="#fff"/><rect x="310" y="43" width="1" height="1" fill="#848284"/><rect x="309" y="44" width="2" height="1" fill="#848284"/><rect x="309" y="45" width="1" height="1" fill="#848284"/><rect x="308" y="46" width="2" height="1" fill="#848284"/><rect x="308" y="47" width="1" height="1" fill="#848284"/><rect x="301" y="48" width="1" height="1" fill="#848284"/><rect x="307" y="48" width="2" height="1" fill="#848284"/><rect x="299" y="49" width="3" height="1" fill="#848284"/><rect x="307" y="49" width="1" height="1" fill="#848284"/><rect x="299" y="50" width="3" height="1" fill="#848284"/><rect x="306" y="50" width="2" height="1" fill="#848284"/><rect x="300" y="51" width="2" height="1" fill="#848284"/><rect x="306" y="51" width="1" height="1" fill="#848284"/><rect x="300" y="52" width="3" height="1" fill="#848284"/><rect x="305" y="52" width="2" height="1" fill="#848284"/><rect x="301" y="53" width="2" height="1" fill="#848284"/><rect x="305" y="53" width="1" height="1" fill="#848284"/><rect x="301" y="54" width="5" height="1" fill="#848284"/><rect x="302" y="55" width="3" height="1" fill="#848284"/><rect x="302" y="56" width="2" height="1" fill="#848284"/><rect x="303" y="57" width="1" height="1" fill="#848284"/><rect x="298" y="49" width="1" height="1" fill="#848284"/><rect x="297" y="50" width="2" height="1" fill="#848284"/><rect x="296" y="51" width="3" height="1" fill="#848284"/><rect x="295" y="52" width="4" height="1" fill="#848284"/><rect x="294" y="53" width="5" height="1" fill="#848284"/><rect x="295" y="54" width="4" height="1" fill="#848284"/><rect x="296" y="55" width="3" height="1" fill="#848284"/><rect x="297" y="56" width="2" height="1" fill="#848284"/><rect x="298" y="57" width="1" height="1" fill="#848284"/><rect x="331" y="44" width="1" height="1" fill="#fff"/><rect x="330" y="45" width="2" height="1" fill="#fff"/><rect x="330" y="46" width="1" height="1" fill="#fff"/><rect x="329" y="47" width="2" height="1" fill="#fff"/><rect x="329" y="48" width="1" height="1" fill="#fff"/><rect x="322" y="49" width="1" height="1" fill="#fff"/><rect x="328" y="49" width="2" height="1" fill="#fff"/><rect x="320" y="50" width="3" height="1" fill="#fff"/><rect x="328" y="50" width="1" height="1" fill="#fff"/><rect x="320" y="51" width="3" height="1" fill="#fff"/><rect x="327" y="51" width="2" height="1" fill="#fff"/><rect x="321" y="52" width="2" height="1" fill="#fff"/><rect x="327" y="52" width="1" height="1" fill="#fff"/><rect x="321" y="53" width="3" height="1" fill="#fff"/><rect x="326" y="53" width="2" height="1" fill="#fff"/><rect x="322" y="54" width="2" height="1" fill="#fff"/><rect x="326" y="54" width="1" height="1" fill="#fff"/><rect x="322" y="55" width="5" height="1" fill="#fff"/><rect x="323" y="56" width="3" height="1" fill="#fff"/><rect x="323" y="57" width="2" height="1" fill="#fff"/><rect x="324" y="58" width="1" height="1" fill="#fff"/><rect x="330" y="51" width="1" height="1" fill="#fff"/><rect x="330" y="52" width="2" height="1" fill="#fff"/><rect x="330" y="53" width="3" height="1" fill="#fff"/><rect x="327" y="54" width="7" height="1" fill="#fff"/><rect x="330" y="55" width="3" height="1" fill="#fff"/><rect x="330" y="56" width="2" height="1" fill="#fff"/><rect x="330" y="57" width="1" height="1" fill="#fff"/><rect x="330" y="43" width="1" height="1" fill="#848284"/><rect x="329" y="44" width="2" height="1" fill="#848284"/><rect x="329" y="45" width="1" height="1" fill="#848284"/><rect x="328" y="46" width="2" height="1" fill="#848284"/><rect x="328" y="47" width="1" height="1" fill="#848284"/><rect x="321" y="48" width="1" height="1" fill="#848284"/><rect x="327" y="48" width="2" height="1" fill="#848284"/><rect x="319" y="49" width="3" height="1" fill="#848284"/><rect x="327" y="49" width="1" height="1" fill="#848284"/><rect x="319" y="50" width="3" height="1" fill="#848284"/><rect x="326" y="50" width="2" height="1" fill="#848284"/><rect x="320" y="51" width="2" height="1" fill="#848284"/><rect x="326" y="51" width="1" height="1" fill="#848284"/><rect x="320" y="52" width="3" height="1" fill="#848284"/><rect x="325" y="52" width="2" height="1" fill="#848284"/><rect x="321" y="53" width="2" height="1" fill="#848284"/><rect x="325" y="53" width="1" height="1" fill="#848284"/><rect x="321" y="54" width="5" height="1" fill="#848284"/><rect x="322" y="55" width="3" height="1" fill="#848284"/><rect x="322" y="56" width="2" height="1" fill="#848284"/><rect x="323" y="57" width="1" height="1" fill="#848284"/><rect x="329" y="50" width="1" height="1" fill="#848284"/><rect x="329" y="51" width="2" height="1" fill="#848284"/><rect x="329" y="52" width="3" height="1" fill="#848284"/><rect x="326" y="53" width="7" height="1" fill="#848284"/><rect x="329" y="54" width="3" height="1" fill="#848284"/><rect x="329" y="55" width="2" height="1" fill="#848284"/><rect x="329" y="56" width="1" height="1" fill="#848284"/><rect x="346" y="43" width="15" height="1" fill="#000"/><rect x="361" y="43" width="1" height="1" fill="#848284"/><rect x="346" y="44" width="14" height="1" fill="#000"/><rect x="360" y="44" width="2" height="1" fill="#848284"/><rect x="346" y="45" width="2" height="1" fill="#000"/><rect x="348" y="45" width="2" height="1" fill="#008000"/><rect x="350" y="45" width="6" height="1" fill="#000"/><rect x="356" y="45" width="2" height="1" fill="#008000"/><rect x="358" y="45" width="1" height="1" fill="#000"/><rect x="359" y="45" width="3" height="1" fill="#848284"/><rect x="346" y="46" width="1" height="1" fill="#000"/><rect x="347" y="46" width="1" height="1" fill="#008000"/><rect x="348" y="46" width="2" height="1" fill="#000"/><rect x="350" y="46" width="1" height="1" fill="#008000"/><rect x="351" y="46" width="4" height="1" fill="#000"/><rect x="355" y="46" width="1" height="1" fill="#008000"/><rect x="356" y="46" width="2" height="1" fill="#000"/><rect x="358" y="46" width="4" height="1" fill="#848284"/><rect x="346" y="47" width="1" height="1" fill="#000"/><rect x="347" y="47" width="1" height="1" fill="#008000"/><rect x="348" y="47" width="2" height="1" fill="#000"/><rect x="350" y="47" width="1" height="1" fill="#008000"/><rect x="351" y="47" width="4" height="1" fill="#000"/><rect x="355" y="47" width="1" height="1" fill="#008000"/><rect x="356" y="47" width="1" height="1" fill="#000"/><rect x="357" y="47" width="5" height="1" fill="#848284"/><rect x="346" y="48" width="1" height="1" fill="#008000"/><rect x="347" y="48" width="4" height="1" fill="#000"/><rect x="351" y="48" width="1" height="1" fill="#008000"/><rect x="352" y="48" width="2" height="1" fill="#000"/><rect x="354" y="48" width="1" height="1" fill="#008000"/><rect x="355" y="48" width="1" height="1" fill="#000"/><rect x="356" y="48" width="6" height="1" fill="#848284"/><rect x="346" y="49" width="5" height="1" fill="#000"/><rect x="351" y="49" width="1" height="1" fill="#008000"/><rect x="352" y="49" width="2" height="1" fill="#000"/><rect x="354" y="49" width="1" height="1" fill="#008000"/><rect x="355" y="49" width="7" height="1" fill="#848284"/><rect x="346" y="50" width="6" height="1" fill="#000"/><rect x="352" y="50" width="2" height="1" fill="#008000"/><rect x="354" y="50" width="1" height="1" fill="#848284"/><rect x="355" y="50" width="1" height="1" fill="#00f000"/><rect x="356" y="50" width="6" height="1" fill="#848284"/><rect x="346" y="51" width="7" height="1" fill="#000"/><rect x="353" y="51" width="2" height="1" fill="#848284"/><rect x="355" y="51" width="1" height="1" fill="#00f000"/><rect x="356" y="51" width="6" height="1" fill="#848284"/><rect x="346" y="52" width="6" height="1" fill="#000"/><rect x="352" y="52" width="3" height="1" fill="#848284"/><rect x="355" y="52" width="1" height="1" fill="#00f000"/><rect x="356" y="52" width="6" height="1" fill="#848284"/><rect x="346" y="53" width="5" height="1" fill="#000"/><rect x="351" y="53" width="4" height="1" fill="#848284"/><rect x="355" y="53" width="1" height="1" fill="#00f000"/><rect x="356" y="53" width="6" height="1" fill="#848284"/><rect x="346" y="54" width="4" height="1" fill="#000"/><rect x="350" y="54" width="5" height="1" fill="#848284"/><rect x="355" y="54" width="1" height="1" fill="#00f000"/><rect x="356" y="54" width="6" height="1" fill="#848284"/><rect x="346" y="55" width="3" height="1" fill="#000"/><rect x="349" y="55" width="5" height="1" fill="#848284"/><rect x="354" y="55" width="1" height="1" fill="#00f000"/><rect x="355" y="55" width="1" height="1" fill="#848284"/><rect x="356" y="55" width="1" height="1" fill="#00f000"/><rect x="357" y="55" width="5" height="1" fill="#848284"/><rect x="346" y="56" width="2" height="1" fill="#000"/><rect x="348" y="56" width="6" height="1" fill="#00f000"/><rect x="354" y="56" width="3" height="1" fill="#848284"/><rect x="357" y="56" width="5" height="1" fill="#00f000"/><rect x="346" y="57" width="1" height="1" fill="#000"/><rect x="347" y="57" width="15" height="1" fill="#848284"/><g transform="translate(375,43)" shape-rendering="auto"><circle cx="8" cy="7.500" r="6.800" fill="#fff" stroke="#848284" stroke-width="1.300"/><path d="M3 4.500h2v-2h2v2h3v-2h2v2h1M3 10.500h10M4.500 8v2M6.500 8v2M8.500 8v2M10.500 8v2" stroke="#848284" fill="none" stroke-width="1"/><path d="M12.500 12.500l3.500 3" stroke="#848284" stroke-width="2"/><path d="M14 15.500l2.500 0" stroke="#fff"/></g><rect x="400" y="44" width="2" height="1" fill="#008000"/><rect x="407" y="44" width="2" height="1" fill="#008000"/><rect x="400" y="45" width="2" height="1" fill="#008000"/><rect x="407" y="45" width="2" height="1" fill="#008000"/><rect x="399" y="46" width="1" height="1" fill="#008000"/><rect x="402" y="46" width="3" height="1" fill="#008000"/><rect x="406" y="46" width="1" height="1" fill="#008000"/><rect x="409" y="46" width="1" height="1" fill="#008000"/><rect x="399" y="47" width="1" height="1" fill="#008000"/><rect x="405" y="47" width="2" height="1" fill="#000"/><rect x="410" y="47" width="2" height="1" fill="#000"/><rect x="405" y="48" width="2" height="1" fill="#000"/><rect x="410" y="48" width="2" height="1" fill="#000"/><rect x="405" y="49" width="2" height="1" fill="#000"/><rect x="410" y="49" width="2" height="1" fill="#000"/><rect x="401" y="50" width="1" height="1" fill="#008000"/><rect x="403" y="50" width="5" height="1" fill="#000"/><rect x="409" y="50" width="5" height="1" fill="#000"/><rect x="400" y="51" width="2" height="1" fill="#008000"/><rect x="403" y="51" width="11" height="1" fill="#000"/><rect x="400" y="52" width="2" height="1" fill="#008000"/><rect x="403" y="52" width="1" height="1" fill="#000"/><rect x="404" y="52" width="1" height="1" fill="#d6d3ce"/><rect x="405" y="52" width="4" height="1" fill="#000"/><rect x="409" y="52" width="1" height="1" fill="#d6d3ce"/><rect x="410" y="52" width="4" height="1" fill="#000"/><rect x="399" y="53" width="4" height="1" fill="#008000"/><rect x="403" y="53" width="1" height="1" fill="#000"/><rect x="404" y="53" width="1" height="1" fill="#d6d3ce"/><rect x="405" y="53" width="4" height="1" fill="#000"/><rect x="409" y="53" width="1" height="1" fill="#d6d3ce"/><rect x="410" y="53" width="4" height="1" fill="#000"/><rect x="403" y="54" width="11" height="1" fill="#000"/><rect x="403" y="55" width="4" height="1" fill="#000"/><rect x="410" y="55" width="4" height="1" fill="#000"/><rect x="403" y="56" width="1" height="1" fill="#000"/><rect x="404" y="56" width="1" height="1" fill="#d6d3ce"/><rect x="405" y="56" width="2" height="1" fill="#000"/><rect x="410" y="56" width="2" height="1" fill="#000"/><rect x="412" y="56" width="1" height="1" fill="#d6d3ce"/><rect x="413" y="56" width="1" height="1" fill="#000"/><rect x="403" y="57" width="4" height="1" fill="#000"/><rect x="410" y="57" width="4" height="1" fill="#000"/><rect x="429" y="43" width="1" height="1" fill="#000"/><rect x="425" y="44" width="1" height="1" fill="#00e8e8"/><rect x="429" y="44" width="1" height="1" fill="#000"/><rect x="425" y="45" width="1" height="1" fill="#00e8e8"/><rect x="428" y="45" width="3" height="1" fill="#000"/><rect x="424" y="46" width="2" height="1" fill="#00e8e8"/><rect x="429" y="46" width="1" height="1" fill="#000"/><rect x="421" y="47" width="1" height="1" fill="#008000"/><rect x="422" y="47" width="2" height="1" fill="#00e8e8"/><rect x="424" y="47" width="2" height="1" fill="#008000"/><rect x="426" y="47" width="2" height="1" fill="#00e8e8"/><rect x="428" y="47" width="9" height="1" fill="#008000"/><rect x="421" y="48" width="1" height="1" fill="#00e8e8"/><rect x="422" y="48" width="6" height="1" fill="#008000"/><rect x="428" y="48" width="1" height="1" fill="#00e8e8"/><rect x="429" y="48" width="8" height="1" fill="#008000"/><rect x="421" y="49" width="1" height="1" fill="#00e8e8"/><rect x="422" y="49" width="7" height="1" fill="#008000"/><rect x="429" y="49" width="1" height="1" fill="#00e8e8"/><rect x="430" y="49" width="7" height="1" fill="#008000"/><rect x="421" y="50" width="8" height="1" fill="#008000"/><rect x="429" y="50" width="1" height="1" fill="#00e8e8"/><rect x="430" y="50" width="6" height="1" fill="#008000"/><rect x="436" y="50" width="1" height="1" fill="#00e8e8"/><rect x="421" y="51" width="9" height="1" fill="#008000"/><rect x="430" y="51" width="1" height="1" fill="#00e8e8"/><rect x="431" y="51" width="5" height="1" fill="#008000"/><rect x="436" y="51" width="1" height="1" fill="#00e8e8"/><rect x="421" y="52" width="10" height="1" fill="#008000"/><rect x="431" y="52" width="1" height="1" fill="#00e8e8"/><rect x="432" y="52" width="2" height="1" fill="#008000"/><rect x="434" y="52" width="2" height="1" fill="#00e8e8"/><rect x="436" y="52" width="1" height="1" fill="#008000"/><rect x="429" y="53" width="1" height="1" fill="#000"/><rect x="431" y="53" width="3" height="1" fill="#00e8e8"/><rect x="428" y="54" width="3" height="1" fill="#000"/><rect x="433" y="54" width="1" height="1" fill="#00e8e8"/><rect x="429" y="55" width="1" height="1" fill="#000"/><rect x="433" y="55" width="1" height="1" fill="#00e8e8"/><rect x="429" y="56" width="1" height="1" fill="#000"/><rect x="433" y="56" width="1" height="1" fill="#00e8e8"/><rect x="429" y="57" width="1" height="1" fill="#000"/><rect x="451" y="43" width="1" height="1" fill="#000"/><rect x="451" y="44" width="1" height="1" fill="#000"/><rect x="450" y="45" width="3" height="1" fill="#000"/><rect x="444" y="46" width="1" height="1" fill="#008000"/><rect x="451" y="46" width="1" height="1" fill="#000"/><rect x="444" y="47" width="2" height="1" fill="#008000"/><rect x="447" y="47" width="13" height="1" fill="#008000"/><rect x="444" y="48" width="1" height="1" fill="#008000"/><rect x="451" y="48" width="1" height="1" fill="#000"/><rect x="450" y="49" width="3" height="1" fill="#000"/><rect x="451" y="50" width="1" height="1" fill="#000"/><rect x="450" y="51" width="3" height="1" fill="#000"/><rect x="444" y="52" width="1" height="1" fill="#00e8e8"/><rect x="451" y="52" width="1" height="1" fill="#000"/><rect x="444" y="53" width="2" height="1" fill="#00e8e8"/><rect x="447" y="53" width="13" height="1" fill="#00e8e8"/><rect x="444" y="54" width="1" height="1" fill="#00e8e8"/><rect x="451" y="54" width="1" height="1" fill="#000"/><rect x="450" y="55" width="3" height="1" fill="#000"/><rect x="451" y="56" width="1" height="1" fill="#000"/><rect x="451" y="57" width="1" height="1" fill="#000"/><rect x="469" y="44" width="1" height="1" fill="#000"/><rect x="474" y="44" width="2" height="1" fill="#008000"/><rect x="468" y="45" width="3" height="1" fill="#000"/><rect x="473" y="45" width="1" height="1" fill="#008000"/><rect x="476" y="45" width="1" height="1" fill="#008000"/><rect x="469" y="46" width="1" height="1" fill="#000"/><rect x="472" y="46" width="1" height="1" fill="#008000"/><rect x="477" y="46" width="1" height="1" fill="#008000"/><rect x="469" y="47" width="1" height="1" fill="#000"/><rect x="477" y="47" width="1" height="1" fill="#008000"/><rect x="483" y="47" width="1" height="1" fill="#008000"/><rect x="468" y="48" width="3" height="1" fill="#000"/><rect x="478" y="48" width="1" height="1" fill="#008000"/><rect x="482" y="48" width="1" height="1" fill="#008000"/><rect x="469" y="49" width="1" height="1" fill="#000"/><rect x="479" y="49" width="3" height="1" fill="#008000"/><rect x="469" y="51" width="1" height="1" fill="#000"/><rect x="468" y="52" width="3" height="1" fill="#000"/><rect x="477" y="52" width="1" height="1" fill="#00e8e8"/><rect x="469" y="53" width="1" height="1" fill="#000"/><rect x="477" y="53" width="1" height="1" fill="#00e8e8"/><rect x="469" y="54" width="1" height="1" fill="#000"/><rect x="477" y="54" width="1" height="1" fill="#00e8e8"/><rect x="468" y="55" width="3" height="1" fill="#000"/><rect x="472" y="55" width="4" height="1" fill="#00e8e8"/><rect x="477" y="55" width="1" height="1" fill="#00e8e8"/><rect x="479" y="55" width="4" height="1" fill="#00e8e8"/><rect x="469" y="56" width="1" height="1" fill="#000"/><rect x="474" y="56" width="4" height="1" fill="#00e8e8"/><rect x="497" y="43" width="1" height="1" fill="#000"/><rect x="501" y="43" width="1" height="1" fill="#000"/><rect x="503" y="43" width="4" height="1" fill="#000"/><rect x="508" y="43" width="1" height="1" fill="#000"/><rect x="512" y="43" width="1" height="1" fill="#000"/><rect x="497" y="44" width="2" height="1" fill="#000"/><rect x="500" y="44" width="2" height="1" fill="#000"/><rect x="503" y="44" width="1" height="1" fill="#000"/><rect x="508" y="44" width="2" height="1" fill="#000"/><rect x="511" y="44" width="2" height="1" fill="#000"/><rect x="497" y="45" width="1" height="1" fill="#000"/><rect x="499" y="45" width="1" height="1" fill="#000"/><rect x="501" y="45" width="1" height="1" fill="#000"/><rect x="503" y="45" width="3" height="1" fill="#000"/><rect x="508" y="45" width="1" height="1" fill="#000"/><rect x="510" y="45" width="1" height="1" fill="#000"/><rect x="512" y="45" width="1" height="1" fill="#000"/><rect x="497" y="46" width="1" height="1" fill="#000"/><rect x="501" y="46" width="1" height="1" fill="#000"/><rect x="503" y="46" width="1" height="1" fill="#000"/><rect x="508" y="46" width="1" height="1" fill="#000"/><rect x="512" y="46" width="1" height="1" fill="#000"/><rect x="497" y="47" width="1" height="1" fill="#000"/><rect x="501" y="47" width="1" height="1" fill="#000"/><rect x="503" y="47" width="4" height="1" fill="#000"/><rect x="508" y="47" width="1" height="1" fill="#000"/><rect x="512" y="47" width="1" height="1" fill="#000"/><rect x="502" y="49" width="2" height="1" fill="#000"/><rect x="501" y="50" width="4" height="1" fill="#000"/><rect x="505" y="50" width="2" height="1" fill="#00e8e8"/><rect x="500" y="51" width="6" height="1" fill="#000"/><rect x="507" y="51" width="1" height="1" fill="#00e8e8"/><rect x="507" y="52" width="1" height="1" fill="#00e8e8"/><rect x="499" y="53" width="1" height="1" fill="#00e8e8"/><rect x="503" y="53" width="1" height="1" fill="#00e8e8"/><rect x="507" y="53" width="1" height="1" fill="#00e8e8"/><rect x="499" y="54" width="1" height="1" fill="#00e8e8"/><rect x="503" y="54" width="1" height="1" fill="#00e8e8"/><rect x="500" y="55" width="1" height="1" fill="#00e8e8"/><rect x="502" y="55" width="1" height="1" fill="#00e8e8"/><rect x="500" y="56" width="1" height="1" fill="#00e8e8"/><rect x="502" y="56" width="1" height="1" fill="#00e8e8"/><rect x="501" y="57" width="1" height="1" fill="#00e8e8"/><path d="M520 50h5v1h-1v1h-1v1h-1v-1h-1v-1h-1z" fill="#000"/><rect x="540" y="43" width="2" height="1" fill="#a00000"/><rect x="545" y="43" width="3" height="1" fill="#a00000"/><rect x="552" y="43" width="2" height="1" fill="#a00000"/><rect x="539" y="44" width="1" height="1" fill="#a00000"/><rect x="541" y="44" width="1" height="1" fill="#a00000"/><rect x="543" y="44" width="1" height="1" fill="#a00000"/><rect x="545" y="44" width="1" height="1" fill="#a00000"/><rect x="547" y="44" width="1" height="1" fill="#a00000"/><rect x="549" y="44" width="1" height="1" fill="#a00000"/><rect x="551" y="44" width="1" height="1" fill="#a00000"/><rect x="539" y="45" width="3" height="1" fill="#a00000"/><rect x="545" y="45" width="7" height="1" fill="#a00000"/><rect x="538" y="46" width="1" height="1" fill="#a00000"/><rect x="541" y="46" width="1" height="1" fill="#a00000"/><rect x="543" y="46" width="1" height="1" fill="#a00000"/><rect x="545" y="46" width="1" height="1" fill="#a00000"/><rect x="547" y="46" width="1" height="1" fill="#a00000"/><rect x="549" y="46" width="1" height="1" fill="#a00000"/><rect x="551" y="46" width="1" height="1" fill="#a00000"/><rect x="538" y="47" width="1" height="1" fill="#a00000"/><rect x="541" y="47" width="1" height="1" fill="#a00000"/><rect x="545" y="47" width="3" height="1" fill="#a00000"/><rect x="552" y="47" width="2" height="1" fill="#a00000"/><rect x="546" y="47" width="3" height="1" fill="#000"/><rect x="545" y="48" width="1" height="1" fill="#000"/><rect x="549" y="48" width="1" height="1" fill="#000"/><rect x="551" y="48" width="1" height="1" fill="#000"/><rect x="541" y="49" width="3" height="1" fill="#000"/><rect x="549" y="49" width="3" height="1" fill="#000"/><rect x="540" y="50" width="1" height="1" fill="#000"/><rect x="541" y="50" width="1" height="1" fill="#ffff00"/><rect x="542" y="50" width="1" height="1" fill="#fff"/><rect x="543" y="50" width="1" height="1" fill="#ffff00"/><rect x="544" y="50" width="5" height="1" fill="#000"/><rect x="550" y="50" width="2" height="1" fill="#000"/><rect x="540" y="51" width="1" height="1" fill="#000"/><rect x="541" y="51" width="1" height="1" fill="#fff"/><rect x="542" y="51" width="1" height="1" fill="#ffff00"/><rect x="543" y="51" width="1" height="1" fill="#fff"/><rect x="544" y="51" width="4" height="1" fill="#ffff00"/><rect x="548" y="51" width="1" height="1" fill="#000"/><rect x="540" y="52" width="1" height="1" fill="#000"/><rect x="541" y="52" width="1" height="1" fill="#ffff00"/><rect x="542" y="52" width="1" height="1" fill="#fff"/><rect x="543" y="52" width="10" height="1" fill="#000"/><rect x="540" y="53" width="1" height="1" fill="#000"/><rect x="541" y="53" width="1" height="1" fill="#ffff00"/><rect x="542" y="53" width="1" height="1" fill="#000"/><rect x="543" y="53" width="8" height="1" fill="#808000"/><rect x="551" y="53" width="1" height="1" fill="#000"/><rect x="540" y="54" width="2" height="1" fill="#000"/><rect x="542" y="54" width="8" height="1" fill="#808000"/><rect x="550" y="54" width="1" height="1" fill="#000"/><rect x="540" y="55" width="1" height="1" fill="#000"/><rect x="541" y="55" width="8" height="1" fill="#808000"/><rect x="549" y="55" width="1" height="1" fill="#000"/><rect x="540" y="56" width="9" height="1" fill="#000"/><path d="M562 50h5v1h-1v1h-1v1h-1v-1h-1v-1h-1z" fill="#000"/><rect x="577" y="44" width="2" height="1" fill="#fff"/><rect x="582" y="44" width="3" height="1" fill="#fff"/><rect x="589" y="44" width="2" height="1" fill="#fff"/><rect x="576" y="45" width="1" height="1" fill="#fff"/><rect x="578" y="45" width="1" height="1" fill="#fff"/><rect x="580" y="45" width="1" height="1" fill="#fff"/><rect x="582" y="45" width="1" height="1" fill="#fff"/><rect x="584" y="45" width="1" height="1" fill="#fff"/><rect x="586" y="45" width="1" height="1" fill="#fff"/><rect x="588" y="45" width="1" height="1" fill="#fff"/><rect x="576" y="46" width="3" height="1" fill="#fff"/><rect x="582" y="46" width="7" height="1" fill="#fff"/><rect x="575" y="47" width="1" height="1" fill="#fff"/><rect x="578" y="47" width="1" height="1" fill="#fff"/><rect x="580" y="47" width="1" height="1" fill="#fff"/><rect x="582" y="47" width="1" height="1" fill="#fff"/><rect x="584" y="47" width="1" height="1" fill="#fff"/><rect x="586" y="47" width="1" height="1" fill="#fff"/><rect x="588" y="47" width="1" height="1" fill="#fff"/><rect x="575" y="48" width="1" height="1" fill="#fff"/><rect x="578" y="48" width="1" height="1" fill="#fff"/><rect x="582" y="48" width="3" height="1" fill="#fff"/><rect x="589" y="48" width="2" height="1" fill="#fff"/><rect x="576" y="43" width="2" height="1" fill="#848284"/><rect x="581" y="43" width="3" height="1" fill="#848284"/><rect x="588" y="43" width="2" height="1" fill="#848284"/><rect x="575" y="44" width="1" height="1" fill="#848284"/><rect x="577" y="44" width="1" height="1" fill="#848284"/><rect x="579" y="44" width="1" height="1" fill="#848284"/><rect x="581" y="44" width="1" height="1" fill="#848284"/><rect x="583" y="44" width="1" height="1" fill="#848284"/><rect x="585" y="44" width="1" height="1" fill="#848284"/><rect x="587" y="44" width="1" height="1" fill="#848284"/><rect x="575" y="45" width="3" height="1" fill="#848284"/><rect x="581" y="45" width="7" height="1" fill="#848284"/><rect x="574" y="46" width="1" height="1" fill="#848284"/><rect x="577" y="46" width="1" height="1" fill="#848284"/><rect x="579" y="46" width="1" height="1" fill="#848284"/><rect x="581" y="46" width="1" height="1" fill="#848284"/><rect x="583" y="46" width="1" height="1" fill="#848284"/><rect x="585" y="46" width="1" height="1" fill="#848284"/><rect x="587" y="46" width="1" height="1" fill="#848284"/><rect x="574" y="47" width="1" height="1" fill="#848284"/><rect x="577" y="47" width="1" height="1" fill="#848284"/><rect x="581" y="47" width="3" height="1" fill="#848284"/><rect x="588" y="47" width="2" height="1" fill="#848284"/><path d="M581 49v9.500l5.500-4.750z" fill="#fff" shape-rendering="auto"/><path d="M580 48v9.500l5.500-4.750z" fill="#848284" shape-rendering="auto"/><rect x="600" y="44" width="2" height="1" fill="#fff"/><rect x="605" y="44" width="3" height="1" fill="#fff"/><rect x="612" y="44" width="2" height="1" fill="#fff"/><rect x="599" y="45" width="1" height="1" fill="#fff"/><rect x="601" y="45" width="1" height="1" fill="#fff"/><rect x="603" y="45" width="1" height="1" fill="#fff"/><rect x="605" y="45" width="1" height="1" fill="#fff"/><rect x="607" y="45" width="1" height="1" fill="#fff"/><rect x="609" y="45" width="1" height="1" fill="#fff"/><rect x="611" y="45" width="1" height="1" fill="#fff"/><rect x="599" y="46" width="3" height="1" fill="#fff"/><rect x="605" y="46" width="7" height="1" fill="#fff"/><rect x="598" y="47" width="1" height="1" fill="#fff"/><rect x="601" y="47" width="1" height="1" fill="#fff"/><rect x="603" y="47" width="1" height="1" fill="#fff"/><rect x="605" y="47" width="1" height="1" fill="#fff"/><rect x="607" y="47" width="1" height="1" fill="#fff"/><rect x="609" y="47" width="1" height="1" fill="#fff"/><rect x="611" y="47" width="1" height="1" fill="#fff"/><rect x="598" y="48" width="1" height="1" fill="#fff"/><rect x="601" y="48" width="1" height="1" fill="#fff"/><rect x="605" y="48" width="3" height="1" fill="#fff"/><rect x="612" y="48" width="2" height="1" fill="#fff"/><rect x="599" y="43" width="2" height="1" fill="#848284"/><rect x="604" y="43" width="3" height="1" fill="#848284"/><rect x="611" y="43" width="2" height="1" fill="#848284"/><rect x="598" y="44" width="1" height="1" fill="#848284"/><rect x="600" y="44" width="1" height="1" fill="#848284"/><rect x="602" y="44" width="1" height="1" fill="#848284"/><rect x="604" y="44" width="1" height="1" fill="#848284"/><rect x="606" y="44" width="1" height="1" fill="#848284"/><rect x="608" y="44" width="1" height="1" fill="#848284"/><rect x="610" y="44" width="1" height="1" fill="#848284"/><rect x="598" y="45" width="3" height="1" fill="#848284"/><rect x="604" y="45" width="7" height="1" fill="#848284"/><rect x="597" y="46" width="1" height="1" fill="#848284"/><rect x="600" y="46" width="1" height="1" fill="#848284"/><rect x="602" y="46" width="1" height="1" fill="#848284"/><rect x="604" y="46" width="1" height="1" fill="#848284"/><rect x="606" y="46" width="1" height="1" fill="#848284"/><rect x="608" y="46" width="1" height="1" fill="#848284"/><rect x="610" y="46" width="1" height="1" fill="#848284"/><rect x="597" y="47" width="1" height="1" fill="#848284"/><rect x="600" y="47" width="1" height="1" fill="#848284"/><rect x="604" y="47" width="3" height="1" fill="#848284"/><rect x="611" y="47" width="2" height="1" fill="#848284"/><rect x="601" y="49" width="10" height="9" fill="#fff"/><rect x="600" y="48" width="10" height="9" fill="#848284"/><rect x="628" y="43" width="2" height="1" fill="#a00000"/><rect x="633" y="43" width="3" height="1" fill="#a00000"/><rect x="640" y="43" width="2" height="1" fill="#a00000"/><rect x="627" y="44" width="1" height="1" fill="#a00000"/><rect x="629" y="44" width="1" height="1" fill="#a00000"/><rect x="631" y="44" width="1" height="1" fill="#a00000"/><rect x="633" y="44" width="1" height="1" fill="#a00000"/><rect x="635" y="44" width="1" height="1" fill="#a00000"/><rect x="637" y="44" width="1" height="1" fill="#a00000"/><rect x="639" y="44" width="1" height="1" fill="#a00000"/><rect x="627" y="45" width="3" height="1" fill="#a00000"/><rect x="633" y="45" width="7" height="1" fill="#a00000"/><rect x="626" y="46" width="1" height="1" fill="#a00000"/><rect x="629" y="46" width="1" height="1" fill="#a00000"/><rect x="631" y="46" width="1" height="1" fill="#a00000"/><rect x="633" y="46" width="1" height="1" fill="#a00000"/><rect x="635" y="46" width="1" height="1" fill="#a00000"/><rect x="637" y="46" width="1" height="1" fill="#a00000"/><rect x="639" y="46" width="1" height="1" fill="#a00000"/><rect x="626" y="47" width="1" height="1" fill="#a00000"/><rect x="629" y="47" width="1" height="1" fill="#a00000"/><rect x="633" y="47" width="3" height="1" fill="#a00000"/><rect x="640" y="47" width="2" height="1" fill="#a00000"/><g transform="translate(626,49)"><rect x="0.500" y="0.500" width="15" height="8" fill="#fff" stroke="#000"/><rect x="1" y="1" width="14" height="2" fill="#0000e0"/><rect x="2" y="4" width="6" height="3" fill="#000"/><rect x="9" y="4" width="2" height="1" fill="#000"/><rect x="12" y="4" width="2" height="1" fill="#000"/><rect x="9" y="6" width="2" height="1" fill="#000"/><rect x="12" y="6" width="2" height="1" fill="#000"/></g><path d="M650 50h5v1h-1v1h-1v1h-1v-1h-1v-1h-1z" fill="#000"/><rect x="671" y="46" width="14" height="13" fill="#fff"/><rect x="670" y="45" width="14" height="13" fill="#848284"/><rect x="694" y="45" width="2" height="1" fill="#848284"/><rect x="697" y="45" width="1" height="1" fill="#848284"/><rect x="699" y="45" width="2" height="1" fill="#848284"/><rect x="702" y="45" width="1" height="1" fill="#848284"/><rect x="695" y="46" width="2" height="1" fill="#fff"/><rect x="698" y="46" width="1" height="1" fill="#fff"/><rect x="700" y="46" width="2" height="1" fill="#fff"/><rect x="703" y="46" width="1" height="1" fill="#fff"/><rect x="694" y="47" width="1" height="1" fill="#848284"/><rect x="696" y="47" width="2" height="1" fill="#848284"/><rect x="699" y="47" width="1" height="1" fill="#848284"/><rect x="701" y="47" width="2" height="1" fill="#848284"/><rect x="695" y="48" width="1" height="1" fill="#fff"/><rect x="697" y="48" width="2" height="1" fill="#fff"/><rect x="700" y="48" width="1" height="1" fill="#fff"/><rect x="702" y="48" width="2" height="1" fill="#fff"/><rect x="694" y="49" width="2" height="1" fill="#848284"/><rect x="697" y="49" width="1" height="1" fill="#848284"/><rect x="699" y="49" width="2" height="1" fill="#848284"/><rect x="702" y="49" width="1" height="1" fill="#848284"/><rect x="695" y="50" width="2" height="1" fill="#fff"/><rect x="698" y="50" width="1" height="1" fill="#fff"/><rect x="700" y="50" width="2" height="1" fill="#fff"/><rect x="703" y="50" width="1" height="1" fill="#fff"/><rect x="694" y="51" width="1" height="1" fill="#848284"/><rect x="696" y="51" width="2" height="1" fill="#848284"/><rect x="699" y="51" width="1" height="1" fill="#848284"/><rect x="701" y="51" width="2" height="1" fill="#848284"/><rect x="695" y="52" width="1" height="1" fill="#fff"/><rect x="697" y="52" width="2" height="1" fill="#fff"/><rect x="700" y="52" width="1" height="1" fill="#fff"/><rect x="702" y="52" width="2" height="1" fill="#fff"/><rect x="694" y="53" width="2" height="1" fill="#848284"/><rect x="697" y="53" width="1" height="1" fill="#848284"/><rect x="699" y="53" width="2" height="1" fill="#848284"/><rect x="702" y="53" width="1" height="1" fill="#848284"/><rect x="695" y="54" width="2" height="1" fill="#fff"/><rect x="698" y="54" width="1" height="1" fill="#fff"/><rect x="700" y="54" width="2" height="1" fill="#fff"/><rect x="703" y="54" width="1" height="1" fill="#fff"/><rect x="694" y="55" width="1" height="1" fill="#848284"/><rect x="696" y="55" width="2" height="1" fill="#848284"/><rect x="699" y="55" width="1" height="1" fill="#848284"/><rect x="701" y="55" width="2" height="1" fill="#848284"/><rect x="695" y="56" width="1" height="1" fill="#fff"/><rect x="697" y="56" width="2" height="1" fill="#fff"/><rect x="700" y="56" width="1" height="1" fill="#fff"/><rect x="702" y="56" width="2" height="1" fill="#fff"/><rect x="715" y="45" width="4" height="1" fill="#848284"/><rect x="720" y="45" width="1" height="1" fill="#848284"/><rect x="722" y="45" width="5" height="1" fill="#848284"/><rect x="716" y="46" width="4" height="1" fill="#848284"/><rect x="723" y="46" width="3" height="1" fill="#848284"/><rect x="726" y="46" width="2" height="1" fill="#fff"/><rect x="717" y="47" width="4" height="1" fill="#848284"/><rect x="722" y="47" width="3" height="1" fill="#848284"/><rect x="725" y="47" width="2" height="1" fill="#fff"/><rect x="718" y="48" width="6" height="1" fill="#848284"/><rect x="724" y="48" width="2" height="1" fill="#fff"/><rect x="719" y="49" width="4" height="1" fill="#848284"/><rect x="723" y="49" width="2" height="1" fill="#fff"/><rect x="726" y="49" width="1" height="1" fill="#848284"/><rect x="719" y="50" width="5" height="1" fill="#848284"/><rect x="724" y="50" width="1" height="1" fill="#fff"/><rect x="718" y="51" width="7" height="1" fill="#848284"/><rect x="725" y="51" width="1" height="1" fill="#fff"/><rect x="727" y="51" width="1" height="1" fill="#848284"/><rect x="717" y="52" width="3" height="1" fill="#848284"/><rect x="720" y="52" width="2" height="1" fill="#fff"/><rect x="722" y="52" width="4" height="1" fill="#848284"/><rect x="726" y="52" width="1" height="1" fill="#fff"/><rect x="716" y="53" width="3" height="1" fill="#848284"/><rect x="719" y="53" width="2" height="1" fill="#fff"/><rect x="723" y="53" width="4" height="1" fill="#848284"/><rect x="727" y="53" width="1" height="1" fill="#fff"/><rect x="716" y="54" width="2" height="1" fill="#848284"/><rect x="718" y="54" width="2" height="1" fill="#fff"/><rect x="721" y="54" width="1" height="1" fill="#848284"/><rect x="724" y="54" width="3" height="1" fill="#848284"/><rect x="727" y="54" width="1" height="1" fill="#fff"/><rect x="716" y="55" width="1" height="1" fill="#848284"/><rect x="717" y="55" width="2" height="1" fill="#fff"/><rect x="720" y="55" width="1" height="1" fill="#848284"/><rect x="722" y="55" width="1" height="1" fill="#848284"/><rect x="725" y="55" width="2" height="1" fill="#848284"/><rect x="727" y="55" width="1" height="1" fill="#fff"/><rect x="717" y="56" width="1" height="1" fill="#fff"/><rect x="728" y="56" width="1" height="1" fill="#fff"/><rect x="749" y="43" width="6" height="1" fill="#000"/><rect x="748" y="44" width="1" height="1" fill="#000"/><rect x="749" y="44" width="5" height="1" fill="#ffff00"/><rect x="754" y="44" width="2" height="1" fill="#000"/><rect x="747" y="45" width="1" height="1" fill="#000"/><rect x="748" y="45" width="2" height="1" fill="#ffff00"/><rect x="750" y="45" width="3" height="1" fill="#000"/><rect x="753" y="45" width="2" height="1" fill="#ffff00"/><rect x="755" y="45" width="2" height="1" fill="#000"/><rect x="747" y="46" width="1" height="1" fill="#000"/><rect x="748" y="46" width="1" height="1" fill="#ffff00"/><rect x="749" y="46" width="2" height="1" fill="#000"/><rect x="752" y="46" width="1" height="1" fill="#000"/><rect x="753" y="46" width="2" height="1" fill="#ffff00"/><rect x="755" y="46" width="2" height="1" fill="#000"/><rect x="747" y="47" width="1" height="1" fill="#000"/><rect x="748" y="47" width="1" height="1" fill="#ffff00"/><rect x="749" y="47" width="1" height="1" fill="#000"/><rect x="751" y="47" width="1" height="1" fill="#000"/><rect x="752" y="47" width="2" height="1" fill="#ffff00"/><rect x="754" y="47" width="2" height="1" fill="#000"/><rect x="748" y="48" width="3" height="1" fill="#000"/><rect x="751" y="48" width="2" height="1" fill="#ffff00"/><rect x="753" y="48" width="2" height="1" fill="#000"/><rect x="750" y="49" width="1" height="1" fill="#000"/><rect x="751" y="49" width="2" height="1" fill="#ffff00"/><rect x="753" y="49" width="1" height="1" fill="#000"/><rect x="750" y="50" width="1" height="1" fill="#000"/><rect x="751" y="50" width="1" height="1" fill="#ffff00"/><rect x="752" y="50" width="2" height="1" fill="#000"/><rect x="750" y="51" width="1" height="1" fill="#000"/><rect x="751" y="51" width="1" height="1" fill="#ffff00"/><rect x="752" y="51" width="2" height="1" fill="#000"/><rect x="750" y="52" width="4" height="1" fill="#000"/><rect x="750" y="53" width="5" height="1" fill="#000"/><rect x="750" y="54" width="1" height="1" fill="#000"/><rect x="751" y="54" width="2" height="1" fill="#ffff00"/><rect x="753" y="54" width="2" height="1" fill="#000"/><rect x="750" y="55" width="1" height="1" fill="#000"/><rect x="751" y="55" width="2" height="1" fill="#ffff00"/><rect x="753" y="55" width="2" height="1" fill="#000"/><rect x="751" y="56" width="3" height="1" fill="#000"/></svg>
<div class="hl" style="left:0;top:62px;width:1024px;background:#848284"></div>
<div class="hl" style="left:0;top:63px;width:134px;background:#fff"></div>
<div class="vl" style="left:55px;top:64px;height:312px;background:#848284"></div>
<div class="vl" style="left:56px;top:64px;height:312px;background:#e7e3de"></div>
<div class="hl" style="left:57px;top:65px;width:76px;background:#848284"></div>
<div class="hl" style="left:58px;top:66px;width:75px;background:#fff"></div>
<div class="vl" style="left:133px;top:65px;height:311px;background:#e7e3de"></div>
<div class="hl" style="left:0px;top:375px;width:56px;background:#848284"></div>
<div class="hl" style="left:0px;top:376px;width:55px;background:#fff"></div>
<div class="hl" style="left:55px;top:376px;width:79px;background:#848284"></div>
<div class="hl" style="left:55px;top:377px;width:79px;background:#e7e3de"></div>
<div class="vl" style="left:134px;top:62px;height:657px;background:#848284"></div>
<div class="vl" style="left:135px;top:63px;height:656px;background:#424142"></div>
<div class="hl" style="left:135px;top:63px;width:889px;background:#424142"></div>
<div class="hl" style="left:0;top:65px;width:20px;background:#848284"></div><div class="vl" style="left:0;top:65px;height:26px;background:#848284"></div><div class="hl" style="left:0;top:90px;width:21px;background:#fff"></div><div class="vl" style="left:20px;top:65px;height:26px;background:#fff"></div>
<div class="btn" style="left:1px;top:66px;width:19px;height:24px"></div>
<div class="t" style="left:3.5px;transform-origin:0 0;top:72.18px;font-size:12.5px;font-weight:bold;color:#000;-webkit-text-stroke:0.3px #000;transform:scaleX(1.036);">1</div>
<svg style="left:12px;top:73px" width="6" height="10"><path d="M0 0l5 4.5l-5 4.5z" fill="#000"/></svg>
<div class="gc" style="left:21px;top:65px;width:34px;height:13px"></div>
<div class="gc" style="left:21px;top:78px;width:34px;height:13px"></div>
<div class="t" style="left:25.14px;transform-origin:50% 0;top:66.18px;font-size:12.5px;color:#000;-webkit-text-stroke:0.3px #000;transform:scaleX(0.817);">0.2V</div>
<div class="t" style="left:26.53px;transform-origin:50% 0;top:79.18px;font-size:12.5px;color:#000;-webkit-text-stroke:0.3px #000;transform:scaleX(0.828);">IN 1</div>
<div class="hl" style="left:0;top:93px;width:20px;background:#848284"></div><div class="vl" style="left:0;top:93px;height:26px;background:#848284"></div><div class="hl" style="left:0;top:118px;width:21px;background:#fff"></div><div class="vl" style="left:20px;top:93px;height:26px;background:#fff"></div>
<div class="btn" style="left:1px;top:94px;width:19px;height:24px"></div>
<div class="t" style="left:3.5px;transform-origin:0 0;top:100.18px;font-size:12.5px;font-weight:bold;color:#000;-webkit-text-stroke:0.3px #000;transform:scaleX(1.036);">2</div>
<svg style="left:12px;top:101px" width="6" height="10"><path d="M0 0l5 4.5l-5 4.5z" fill="#000"/></svg>
<div class="gc" style="left:21px;top:93px;width:34px;height:13px"></div>
<div class="gc" style="left:21px;top:106px;width:34px;height:13px"></div>
<div class="t" style="left:30.35px;transform-origin:50% 0;top:94.18px;font-size:12.5px;color:#000;-webkit-text-stroke:0.3px #000;transform:scaleX(0.784);">2V</div>
<div class="t" style="left:26.53px;transform-origin:50% 0;top:107.18px;font-size:12.5px;color:#000;-webkit-text-stroke:0.3px #000;transform:scaleX(0.828);">IN 2</div>
<div class="hl" style="left:0;top:122px;width:20px;background:#848284"></div><div class="vl" style="left:0;top:122px;height:26px;background:#848284"></div><div class="hl" style="left:0;top:147px;width:21px;background:#fff"></div><div class="vl" style="left:20px;top:122px;height:26px;background:#fff"></div>
<div class="btn" style="left:1px;top:123px;width:19px;height:24px"></div>
<div class="t" style="left:3.5px;transform-origin:0 0;top:129.18px;font-size:12.5px;font-weight:bold;color:#000;-webkit-text-stroke:0.3px #000;transform:scaleX(1.036);">3</div>
<svg style="left:12px;top:130px" width="6" height="10"><path d="M0 0l5 4.5l-5 4.5z" fill="#000"/></svg>
<div class="gc" style="left:21px;top:122px;width:34px;height:13px"></div>
<div class="gc" style="left:21px;top:135px;width:34px;height:13px"></div>
<div class="t" style="left:25.14px;transform-origin:50% 0;top:123.18px;font-size:12.5px;color:#000;-webkit-text-stroke:0.3px #000;transform:scaleX(0.817);">0.2V</div>
<div class="t" style="left:26.53px;transform-origin:50% 0;top:136.18px;font-size:12.5px;color:#000;-webkit-text-stroke:0.3px #000;transform:scaleX(0.828);">IN 3</div>
<div class="hl" style="left:0;top:150px;width:20px;background:#848284"></div><div class="vl" style="left:0;top:150px;height:26px;background:#848284"></div><div class="hl" style="left:0;top:175px;width:21px;background:#fff"></div><div class="vl" style="left:20px;top:150px;height:26px;background:#fff"></div>
<div class="a" style="left:1px;top:151px;width:19px;height:24px;background:#000"></div>
<div class="btn" style="left:2px;top:152px;width:17px;height:22px"></div>
<div class="t" style="left:4.5px;transform-origin:0 0;top:157.18px;font-size:12.5px;font-weight:bold;color:#000;-webkit-text-stroke:0.3px #000;transform:scaleX(1.036);">4</div>
<svg style="left:13px;top:158px" width="6" height="10"><path d="M0 0l5 4.5l-5 4.5z" fill="#000"/></svg>
<div class="gc" style="left:21px;top:150px;width:34px;height:13px"></div>
<div class="gc" style="left:21px;top:163px;width:34px;height:13px"></div>
<div class="t" style="left:30.35px;transform-origin:50% 0;top:151.18px;font-size:12.5px;color:#000;-webkit-text-stroke:0.3px #000;transform:scaleX(0.784);">5V</div>
<div class="t" style="left:26.53px;transform-origin:50% 0;top:164.18px;font-size:12.5px;color:#000;-webkit-text-stroke:0.3px #000;transform:scaleX(0.828);">IN 4</div>
<div class="hl" style="left:0;top:179px;width:20px;background:#848284"></div><div class="vl" style="left:0;top:179px;height:26px;background:#848284"></div><div class="hl" style="left:0;top:204px;width:21px;background:#fff"></div><div class="vl" style="left:20px;top:179px;height:26px;background:#fff"></div>
<div class="btn" style="left:1px;top:180px;width:19px;height:24px"></div>
<div class="t" style="left:3.5px;transform-origin:0 0;top:186.18px;font-size:12.5px;font-weight:bold;color:#848284;-webkit-text-stroke:0.3px #848284;transform:scaleX(1.036);text-shadow:1px 1px 0 #fff;">5</div>
<svg style="left:13px;top:188px" width="6" height="10"><path d="M0 0l5 4.5l-5 4.5z" fill="#fff"/></svg>
<svg style="left:12px;top:187px" width="6" height="10"><path d="M0 0l5 4.5l-5 4.5z" fill="#848284"/></svg>
<div class="gc" style="left:21px;top:179px;width:34px;height:13px"></div>
<div class="gc" style="left:21px;top:192px;width:34px;height:13px"></div>

<div class="t" style="left:31.75px;transform-origin:50% 0;top:180.18px;font-size:12.5px;color:#000;-webkit-text-stroke:0.3px #000;transform:scaleX(0.720);">---</div>
<div class="t" style="left:31.75px;transform-origin:50% 0;top:193.18px;font-size:12.5px;color:#000;-webkit-text-stroke:0.3px #000;transform:scaleX(0.720);">---</div>
<div class="hl" style="left:0;top:207px;width:20px;background:#848284"></div><div class="vl" style="left:0;top:207px;height:26px;background:#848284"></div><div class="hl" style="left:0;top:232px;width:21px;background:#fff"></div><div class="vl" style="left:20px;top:207px;height:26px;background:#fff"></div>
<div class="btn" style="left:1px;top:208px;width:19px;height:24px"></div>
<div class="t" style="left:3.5px;transform-origin:0 0;top:214.18px;font-size:12.5px;font-weight:bold;color:#848284;-webkit-text-stroke:0.3px #848284;transform:scaleX(1.036);text-shadow:1px 1px 0 #fff;">6</div>
<svg style="left:13px;top:216px" width="6" height="10"><path d="M0 0l5 4.5l-5 4.5z" fill="#fff"/></svg>
<svg style="left:12px;top:215px" width="6" height="10"><path d="M0 0l5 4.5l-5 4.5z" fill="#848284"/></svg>
<div class="gc" style="left:21px;top:207px;width:34px;height:13px"></div>
<div class="gc" style="left:21px;top:220px;width:34px;height:13px"></div>

<div class="t" style="left:31.75px;transform-origin:50% 0;top:208.18px;font-size:12.5px;color:#000;-webkit-text-stroke:0.3px #000;transform:scaleX(0.720);">---</div>
<div class="t" style="left:31.75px;transform-origin:50% 0;top:221.18px;font-size:12.5px;color:#000;-webkit-text-stroke:0.3px #000;transform:scaleX(0.720);">---</div>
<div class="hl" style="left:0;top:236px;width:20px;background:#848284"></div><div class="vl" style="left:0;top:236px;height:26px;background:#848284"></div><div class="hl" style="left:0;top:261px;width:21px;background:#fff"></div><div class="vl" style="left:20px;top:236px;height:26px;background:#fff"></div>
<div class="btn" style="left:1px;top:237px;width:19px;height:24px"></div>
<div class="t" style="left:3.5px;transform-origin:0 0;top:243.18px;font-size:12.5px;font-weight:bold;color:#848284;-webkit-text-stroke:0.3px #848284;transform:scaleX(1.036);text-shadow:1px 1px 0 #fff;">7</div>
<svg style="left:13px;top:245px" width="6" height="10"><path d="M0 0l5 4.5l-5 4.5z" fill="#fff"/></svg>
<svg style="left:12px;top:244px" width="6" height="10"><path d="M0 0l5 4.5l-5 4.5z" fill="#848284"/></svg>
<div class="gc" style="left:21px;top:236px;width:34px;height:13px"></div>
<div class="gc" style="left:21px;top:249px;width:34px;height:13px"></div>

<div class="t" style="left:31.75px;transform-origin:50% 0;top:237.18px;font-size:12.5px;color:#000;-webkit-text-stroke:0.3px #000;transform:scaleX(0.720);">---</div>
<div class="t" style="left:31.75px;transform-origin:50% 0;top:250.18px;font-size:12.5px;color:#000;-webkit-text-stroke:0.3px #000;transform:scaleX(0.720);">---</div>
<div class="hl" style="left:0;top:264px;width:20px;background:#848284"></div><div class="vl" style="left:0;top:264px;height:26px;background:#848284"></div><div class="hl" style="left:0;top:289px;width:21px;background:#fff"></div><div class="vl" style="left:20px;top:264px;height:26px;background:#fff"></div>
<div class="btn" style="left:1px;top:265px;width:19px;height:24px"></div>
<div class="t" style="left:3.5px;transform-origin:0 0;top:271.18px;font-size:12.5px;font-weight:bold;color:#848284;-webkit-text-stroke:0.3px #848284;transform:scaleX(1.036);text-shadow:1px 1px 0 #fff;">8</div>
<svg style="left:13px;top:273px" width="6" height="10"><path d="M0 0l5 4.5l-5 4.5z" fill="#fff"/></svg>
<svg style="left:12px;top:272px" width="6" height="10"><path d="M0 0l5 4.5l-5 4.5z" fill="#848284"/></svg>
<div class="gc" style="left:21px;top:264px;width:34px;height:13px"></div>
<div class="gc" style="left:21px;top:277px;width:34px;height:13px"></div>

<div class="t" style="left:31.75px;transform-origin:50% 0;top:265.18px;font-size:12.5px;color:#000;-webkit-text-stroke:0.3px #000;transform:scaleX(0.720);">---</div>
<div class="t" style="left:31.75px;transform-origin:50% 0;top:278.18px;font-size:12.5px;color:#000;-webkit-text-stroke:0.3px #000;transform:scaleX(0.720);">---</div>
<div class="hl" style="left:0;top:291px;width:54px;background:#848284"></div><div class="hl" style="left:0;top:292px;width:54px;background:#fff"></div>
<div class="gc" style="left:1px;top:294px;width:33px;height:22px"></div>
<div class="t" style="left:8.30px;transform-origin:50% 0;top:300.18px;font-size:12.5px;color:#000;-webkit-text-stroke:0.3px #000;transform:scaleX(0.776);">1:1</div>
<div class="sbtn" style="left:34px;top:294px;width:10px;height:22px"></div>
<div class="sbtn" style="left:44px;top:294px;width:10px;height:11px"></div>
<div class="sbtn" style="left:44px;top:305px;width:10px;height:11px"></div>
<svg style="left:34px;top:294px" width="20" height="22" shape-rendering="crispEdges"><path d="M4 10h1v2h-1zM5 9h1v4h-1z" fill="#000"/><path d="M14 5h2v1h-2zM13 6h4v1h-4z" fill="#000"/><path d="M13 16h4v1h-4zM14 17h2v1h-2z" fill="#000"/></svg>
<div class="gc" style="left:0px;top:320px;width:53px;height:23px"></div>
<div class="t" style="left:13.95px;transform-origin:50% 0;top:326.18px;font-size:12.5px;color:#000;-webkit-text-stroke:0.3px #000;transform:scaleX(0.812);">5 ms</div>
<div class="sunk" style="left:58px;top:69px;width:74px;height:304px"></div>
<div class="a" style="left:59px;top:70px;width:9px;height:245px;background:#d6d3ce"></div>
<div class="a" style="left:68px;top:70px;width:63px;height:245px;background:#e7ffde"></div>
<div class="hl" style="left:59px;top:97px;width:72px;background:#000"></div>
<div class="t" style="left:61px;transform-origin:0 0;top:73.18px;font-size:12.5px;color:#000;-webkit-text-stroke:0.3px #000;transform:scaleX(0.820);">1</div>
<div class="t" style="left:72px;transform-origin:0 0;top:71.18px;font-size:12.5px;color:#000;-webkit-text-stroke:0.3px #000;transform:scaleX(0.820);">V: 593.4 mV</div>
<div class="t" style="left:72px;transform-origin:0 0;top:84.18px;font-size:12.5px;color:#000;-webkit-text-stroke:0.3px #000;transform:scaleX(0.820);">V: 358.9 mV</div>
<svg style="left:68px;top:91px" width="5" height="3" shape-rendering="crispEdges"><path d="M0 3h5v-1h-1v-1h-1v-1h-1v1h-1v1h-1z" fill="#000"/></svg>
<div class="hl" style="left:59px;top:124px;width:72px;background:#000"></div>
<div class="t" style="left:61px;transform-origin:0 0;top:100.18px;font-size:12.5px;color:#000;-webkit-text-stroke:0.3px #000;transform:scaleX(0.820);">2</div>
<div class="t" style="left:72px;transform-origin:0 0;top:98.18px;font-size:12.5px;color:#000;-webkit-text-stroke:0.3px #000;transform:scaleX(0.840);">V:-21.97 mV</div>
<div class="t" style="left:72px;transform-origin:0 0;top:111.18px;font-size:12.5px;color:#000;-webkit-text-stroke:0.3px #000;transform:scaleX(0.792);">V:</div>
<div class="t" style="left:94px;transform-origin:0 0;top:111.18px;font-size:12.5px;color:#000;-webkit-text-stroke:0.3px #000;transform:scaleX(0.822);">0.0 V</div>
<svg style="left:68px;top:118px" width="5" height="3" shape-rendering="crispEdges"><path d="M0 3h5v-1h-1v-1h-1v-1h-1v1h-1v1h-1z" fill="#000"/></svg>
<div class="hl" style="left:59px;top:151px;width:72px;background:#000"></div>
<div class="t" style="left:61px;transform-origin:0 0;top:127.18px;font-size:12.5px;color:#000;-webkit-text-stroke:0.3px #000;transform:scaleX(0.820);">3</div>
<div class="t" style="left:72px;transform-origin:0 0;top:125.18px;font-size:12.5px;color:#000;-webkit-text-stroke:0.3px #000;transform:scaleX(0.820);">V: 446.9 mV</div>
<div class="t" style="left:72px;transform-origin:0 0;top:138.18px;font-size:12.5px;color:#000;-webkit-text-stroke:0.3px #000;transform:scaleX(0.840);">V:-322.3 mV</div>
<svg style="left:68px;top:145px" width="5" height="3" shape-rendering="crispEdges"><path d="M0 3h5v-1h-1v-1h-1v-1h-1v1h-1v1h-1z" fill="#000"/></svg>
<div class="hl" style="left:59px;top:178px;width:72px;background:#000"></div>
<div class="t" style="left:61px;transform-origin:0 0;top:154.18px;font-size:12.5px;color:#000;-webkit-text-stroke:0.3px #000;transform:scaleX(0.820);">4</div>
<div class="t" style="left:72px;transform-origin:0 0;top:152.18px;font-size:12.5px;color:#000;-webkit-text-stroke:0.3px #000;transform:scaleX(0.792);">V:</div>
<div class="t" style="left:87px;transform-origin:0 0;top:152.18px;font-size:12.5px;color:#000;-webkit-text-stroke:0.3px #000;transform:scaleX(0.825);">-10.13 V</div>
<div class="t" style="left:72px;transform-origin:0 0;top:165.18px;font-size:12.5px;color:#000;-webkit-text-stroke:0.3px #000;transform:scaleX(0.792);">V:</div>
<div class="t" style="left:87px;transform-origin:0 0;top:165.18px;font-size:12.5px;color:#000;-webkit-text-stroke:0.3px #000;transform:scaleX(0.825);">-21.92 V</div>
<svg style="left:68px;top:172px" width="5" height="3" shape-rendering="crispEdges"><path d="M0 3h5v-1h-1v-1h-1v-1h-1v1h-1v1h-1z" fill="#000"/></svg>
<div class="hl" style="left:59px;top:205px;width:72px;background:#000"></div>
<div class="t" style="left:61px;transform-origin:0 0;top:181.18px;font-size:12.5px;color:#000;-webkit-text-stroke:0.3px #000;transform:scaleX(0.820);">5</div>
<div class="t" style="left:72px;transform-origin:0 0;top:179.18px;font-size:12.5px;color:#000;-webkit-text-stroke:0.3px #000;transform:scaleX(0.792);">V:</div>
<div class="t" style="left:98px;transform-origin:0 0;top:179.18px;font-size:12.5px;color:#000;-webkit-text-stroke:0.3px #000;transform:scaleX(0.745);">--.--</div>
<div class="t" style="left:72px;transform-origin:0 0;top:192.18px;font-size:12.5px;color:#000;-webkit-text-stroke:0.3px #000;transform:scaleX(0.792);">V:</div>
<div class="t" style="left:98px;transform-origin:0 0;top:192.18px;font-size:12.5px;color:#000;-webkit-text-stroke:0.3px #000;transform:scaleX(0.745);">--.--</div>
<svg style="left:68px;top:199px" width="5" height="3" shape-rendering="crispEdges"><path d="M0 3h5v-1h-1v-1h-1v-1h-1v1h-1v1h-1z" fill="#000"/></svg>
<div class="hl" style="left:59px;top:232px;width:72px;background:#000"></div>
<div class="t" style="left:61px;transform-origin:0 0;top:208.18px;font-size:12.5px;color:#000;-webkit-text-stroke:0.3px #000;transform:scaleX(0.820);">6</div>
<div class="t" style="left:72px;transform-origin:0 0;top:206.18px;font-size:12.5px;color:#000;-webkit-text-stroke:0.3px #000;transform:scaleX(0.792);">V:</div>
<div class="t" style="left:98px;transform-origin:0 0;top:206.18px;font-size:12.5px;color:#000;-webkit-text-stroke:0.3px #000;transform:scaleX(0.745);">--.--</div>
<div class="t" style="left:72px;transform-origin:0 0;top:219.18px;font-size:12.5px;color:#000;-webkit-text-stroke:0.3px #000;transform:scaleX(0.792);">V:</div>
<div class="t" style="left:98px;transform-origin:0 0;top:219.18px;font-size:12.5px;color:#000;-webkit-text-stroke:0.3px #000;transform:scaleX(0.745);">--.--</div>
<svg style="left:68px;top:226px" width="5" height="3" shape-rendering="crispEdges"><path d="M0 3h5v-1h-1v-1h-1v-1h-1v1h-1v1h-1z" fill="#000"/></svg>
<div class="hl" style="left:59px;top:259px;width:72px;background:#000"></div>
<div class="t" style="left:61px;transform-origin:0 0;top:235.18px;font-size:12.5px;color:#000;-webkit-text-stroke:0.3px #000;transform:scaleX(0.820);">7</div>
<div class="t" style="left:72px;transform-origin:0 0;top:233.18px;font-size:12.5px;color:#000;-webkit-text-stroke:0.3px #000;transform:scaleX(0.792);">V:</div>
<div class="t" style="left:98px;transform-origin:0 0;top:233.18px;font-size:12.5px;color:#000;-webkit-text-stroke:0.3px #000;transform:scaleX(0.745);">--.--</div>
<div class="t" style="left:72px;transform-origin:0 0;top:246.18px;font-size:12.5px;color:#000;-webkit-text-stroke:0.3px #000;transform:scaleX(0.792);">V:</div>
<div class="t" style="left:98px;transform-origin:0 0;top:246.18px;font-size:12.5px;color:#000;-webkit-text-stroke:0.3px #000;transform:scaleX(0.745);">--.--</div>
<svg style="left:68px;top:253px" width="5" height="3" shape-rendering="crispEdges"><path d="M0 3h5v-1h-1v-1h-1v-1h-1v1h-1v1h-1z" fill="#000"/></svg>
<div class="hl" style="left:59px;top:286px;width:72px;background:#000"></div>
<div class="t" style="left:61px;transform-origin:0 0;top:262.18px;font-size:12.5px;color:#000;-webkit-text-stroke:0.3px #000;transform:scaleX(0.820);">8</div>
<div class="t" style="left:72px;transform-origin:0 0;top:260.18px;font-size:12.5px;color:#000;-webkit-text-stroke:0.3px #000;transform:scaleX(0.792);">V:</div>
<div class="t" style="left:98px;transform-origin:0 0;top:260.18px;font-size:12.5px;color:#000;-webkit-text-stroke:0.3px #000;transform:scaleX(0.745);">--.--</div>
<div class="t" style="left:72px;transform-origin:0 0;top:273.18px;font-size:12.5px;color:#000;-webkit-text-stroke:0.3px #000;transform:scaleX(0.792);">V:</div>
<div class="t" style="left:98px;transform-origin:0 0;top:273.18px;font-size:12.5px;color:#000;-webkit-text-stroke:0.3px #000;transform:scaleX(0.745);">--.--</div>
<svg style="left:68px;top:280px" width="5" height="3" shape-rendering="crispEdges"><path d="M0 3h5v-1h-1v-1h-1v-1h-1v1h-1v1h-1z" fill="#000"/></svg>
<div class="hl" style="left:59px;top:315px;width:72px;background:#000"></div>
<div class="t" style="left:60px;transform-origin:0 0;top:289.18px;font-size:12.5px;color:#000;-webkit-text-stroke:0.3px #000;transform:scaleX(0.820);">E</div>
<svg style="left:68px;top:295px" width="5" height="3" shape-rendering="crispEdges"><path d="M0 3h5v-1h-1v-1h-1v-1h-1v1h-1v1h-1z" fill="#000"/></svg>
<div class="t" style="left:73px;transform-origin:0 0;top:288.18px;font-size:12.5px;color:#000;-webkit-text-stroke:0.3px #000;transform:scaleX(0.863);">t:</div>
<div class="t" style="left:91px;transform-origin:0 0;top:288.18px;font-size:12.5px;color:#000;-webkit-text-stroke:0.3px #000;transform:scaleX(0.800);">9.0 ms</div>
<div class="t" style="left:72.5px;transform-origin:0 0;top:301.18px;font-size:12.5px;color:#000;-webkit-text-stroke:0.3px #000;transform:scaleX(0.868);">F: 111.1 Hz</div>
<div class="a" style="left:136px;top:64px;width:870px;height:638px;background:#000"></div>
<svg style="left:136px;top:63px" width="870" height="639" viewBox="0 0 870 639">
<defs><clipPath id="cp"><rect x="0" y="1" width="870" height="638"/></clipPath></defs><g clip-path="url(#cp)">
<g stroke="#a5a2a5" stroke-width="1" stroke-dasharray="1 4" shape-rendering="crispEdges"><line x1="24" y1="25.5" x2="870" y2="25.5"/><line x1="24" y1="50.5" x2="870" y2="50.5"/><line x1="24" y1="75.5" x2="870" y2="75.5"/><line x1="24" y1="100.5" x2="870" y2="100.5"/><line x1="24" y1="125.5" x2="870" y2="125.5"/><line x1="24" y1="150.5" x2="870" y2="150.5"/><line x1="24" y1="175.5" x2="870" y2="175.5"/><line x1="24" y1="200.5" x2="870" y2="200.5"/><line x1="24" y1="225.5" x2="870" y2="225.5"/><line x1="24" y1="250.5" x2="870" y2="250.5"/><line x1="24" y1="275.5" x2="870" y2="275.5"/><line x1="24" y1="300.5" x2="870" y2="300.5"/><line x1="24" y1="325.5" x2="870" y2="325.5"/><line x1="24" y1="350.5" x2="870" y2="350.5"/><line x1="24" y1="375.5" x2="870" y2="375.5"/><line x1="24" y1="400.5" x2="870" y2="400.5"/><line x1="24" y1="425.5" x2="870" y2="425.5"/><line x1="24" y1="450.5" x2="870" y2="450.5"/><line x1="24" y1="475.5" x2="870" y2="475.5"/><line x1="24" y1="500.5" x2="870" y2="500.5"/><line x1="24" y1="525.5" x2="870" y2="525.5"/><line x1="24" y1="550.5" x2="870" y2="550.5"/><line x1="24" y1="575.5" x2="870" y2="575.5"/><line x1="24" y1="600.5" x2="870" y2="600.5"/></g>
<g stroke="#a5a2a5" stroke-width="1" stroke-dasharray="1 4" shape-rendering="crispEdges"><line x1="24.5" y1="5" x2="24.5" y2="601"/><line x1="49.5" y1="5" x2="49.5" y2="601"/><line x1="74.5" y1="5" x2="74.5" y2="601"/><line x1="99.5" y1="5" x2="99.5" y2="601"/><line x1="124.5" y1="5" x2="124.5" y2="601"/><line x1="149.5" y1="5" x2="149.5" y2="601"/><line x1="174.5" y1="5" x2="174.5" y2="601"/><line x1="199.5" y1="5" x2="199.5" y2="601"/><line x1="224.5" y1="5" x2="224.5" y2="601"/><line x1="249.5" y1="5" x2="249.5" y2="601"/><line x1="274.5" y1="5" x2="274.5" y2="601"/><line x1="299.5" y1="5" x2="299.5" y2="601"/><line x1="324.5" y1="5" x2="324.5" y2="601"/><line x1="349.5" y1="5" x2="349.5" y2="601"/><line x1="374.5" y1="5" x2="374.5" y2="601"/><line x1="399.5" y1="5" x2="399.5" y2="601"/><line x1="424.5" y1="5" x2="424.5" y2="601"/><line x1="449.5" y1="5" x2="449.5" y2="601"/><line x1="474.5" y1="5" x2="474.5" y2="601"/><line x1="499.5" y1="5" x2="499.5" y2="601"/><line x1="524.5" y1="5" x2="524.5" y2="601"/><line x1="549.5" y1="5" x2="549.5" y2="601"/><line x1="574.5" y1="5" x2="574.5" y2="601"/><line x1="599.5" y1="5" x2="599.5" y2="601"/><line x1="624.5" y1="5" x2="624.5" y2="601"/><line x1="649.5" y1="5" x2="649.5" y2="601"/><line x1="674.5" y1="5" x2="674.5" y2="601"/><line x1="699.5" y1="5" x2="699.5" y2="601"/><line x1="724.5" y1="5" x2="724.5" y2="601"/><line x1="749.5" y1="5" x2="749.5" y2="601"/><line x1="774.5" y1="5" x2="774.5" y2="601"/><line x1="799.5" y1="5" x2="799.5" y2="601"/><line x1="824.5" y1="5" x2="824.5" y2="601"/><line x1="849.5" y1="5" x2="849.5" y2="601"/></g>
<g fill="#a5a2a5" shape-rendering="crispEdges"><rect x="0" y="4" width="1" height="1"/><rect x="0" y="9" width="1" height="1"/><rect x="0" y="14" width="1" height="1"/><rect x="0" y="19" width="1" height="1"/><rect x="0" y="29" width="1" height="1"/><rect x="0" y="34" width="1" height="1"/><rect x="0" y="39" width="1" height="1"/><rect x="0" y="44" width="1" height="1"/><rect x="0" y="54" width="1" height="1"/><rect x="0" y="59" width="1" height="1"/><rect x="0" y="64" width="1" height="1"/><rect x="0" y="69" width="1" height="1"/><rect x="0" y="79" width="1" height="1"/><rect x="0" y="84" width="1" height="1"/><rect x="0" y="89" width="1" height="1"/><rect x="0" y="94" width="1" height="1"/><rect x="0" y="104" width="1" height="1"/><rect x="0" y="109" width="1" height="1"/><rect x="0" y="114" width="1" height="1"/><rect x="0" y="119" width="1" height="1"/><rect x="0" y="129" width="1" height="1"/><rect x="0" y="134" width="1" height="1"/><rect x="0" y="139" width="1" height="1"/><rect x="0" y="144" width="1" height="1"/><rect x="0" y="154" width="1" height="1"/><rect x="0" y="159" width="1" height="1"/><rect x="0" y="164" width="1" height="1"/><rect x="0" y="169" width="1" height="1"/><rect x="0" y="179" width="1" height="1"/><rect x="0" y="184" width="1" height="1"/><rect x="0" y="189" width="1" height="1"/><rect x="0" y="194" width="1" height="1"/><rect x="0" y="204" width="1" height="1"/><rect x="0" y="209" width="1" height="1"/><rect x="0" y="214" width="1" height="1"/><rect x="0" y="219" width="1" height="1"/><rect x="0" y="229" width="1" height="1"/><rect x="0" y="234" width="1" height="1"/><rect x="0" y="239" width="1" height="1"/><rect x="0" y="244" width="1" height="1"/><rect x="0" y="254" width="1" height="1"/><rect x="0" y="259" width="1" height="1"/><rect x="0" y="264" width="1" height="1"/><rect x="0" y="269" width="1" height="1"/><rect x="0" y="279" width="1" height="1"/><rect x="0" y="284" width="1" height="1"/><rect x="0" y="289" width="1" height="1"/><rect x="0" y="294" width="1" height="1"/><rect x="0" y="304" width="1" height="1"/><rect x="0" y="309" width="1" height="1"/><rect x="0" y="314" width="1" height="1"/><rect x="0" y="319" width="1" height="1"/><rect x="0" y="329" width="1" height="1"/><rect x="0" y="334" width="1" height="1"/><rect x="0" y="339" width="1" height="1"/><rect x="0" y="344" width="1" height="1"/><rect x="0" y="354" width="1" height="1"/><rect x="0" y="359" width="1" height="1"/><rect x="0" y="364" width="1" height="1"/><rect x="0" y="369" width="1" height="1"/><rect x="0" y="379" width="1" height="1"/><rect x="0" y="384" width="1" height="1"/><rect x="0" y="389" width="1" height="1"/><rect x="0" y="394" width="1" height="1"/><rect x="0" y="404" width="1" height="1"/><rect x="0" y="409" width="1" height="1"/><rect x="0" y="414" width="1" height="1"/><rect x="0" y="419" width="1" height="1"/><rect x="0" y="429" width="1" height="1"/><rect x="0" y="434" width="1" height="1"/><rect x="0" y="439" width="1" height="1"/><rect x="0" y="444" width="1" height="1"/><rect x="0" y="454" width="1" height="1"/><rect x="0" y="459" width="1" height="1"/><rect x="0" y="464" width="1" height="1"/><rect x="0" y="469" width="1" height="1"/><rect x="0" y="479" width="1" height="1"/><rect x="0" y="484" width="1" height="1"/><rect x="0" y="489" width="1" height="1"/><rect x="0" y="494" width="1" height="1"/><rect x="0" y="504" width="1" height="1"/><rect x="0" y="509" width="1" height="1"/><rect x="0" y="514" width="1" height="1"/><rect x="0" y="519" width="1" height="1"/><rect x="0" y="529" width="1" height="1"/><rect x="0" y="534" width="1" height="1"/><rect x="0" y="539" width="1" height="1"/><rect x="0" y="544" width="1" height="1"/><rect x="0" y="554" width="1" height="1"/><rect x="0" y="559" width="1" height="1"/><rect x="0" y="564" width="1" height="1"/><rect x="0" y="569" width="1" height="1"/><rect x="0" y="579" width="1" height="1"/><rect x="0" y="584" width="1" height="1"/><rect x="0" y="589" width="1" height="1"/><rect x="0" y="594" width="1" height="1"/></g>
<line x1="24" y1="125.5" x2="870" y2="125.5" stroke="#a5a2a5" shape-rendering="crispEdges"/>
<line x1="24" y1="573.5" x2="870" y2="573.5" stroke="#8c8c00" shape-rendering="crispEdges"/>
<line x1="24" y1="475.5" x2="870" y2="475.5" stroke="#c00000" shape-rendering="crispEdges"/>
<polyline points="25.2,634.2 27.5,632.0 30.4,630.2 34.0,630.2 35.5,631.3 39.0,631.6 40.5,633.0 41.5,634.0 44.5,634.2 46.0,635.0 47.5,635.8 49.0,635.5 50.0,634.0 51.0,633.3 53.0,633.5 54.5,634.0 56.0,632.5 58.0,631.4 63.0,631.4 64.5,632.2 67.9,633.0 70.0,633.3 72.2,634.3 74.4,634.3 76.6,633.3 78.8,633.7 81.0,634.3 83.2,634.1 85.4,633.5 87.6,634.3 89.8,632.7 92.0,634.3 94.2,632.7 96.4,634.1 98.6,633.7 100.8,634.3 103.0,633.3 105.2,633.3 107.4,633.5 109.6,634.1 111.8,634.3 114.0,634.3 116.2,634.1 118.4,634.1 120.6,633.5 122.8,633.3 125.0,633.3 127.2,633.5 129.4,633.3 131.6,634.3 133.8,634.1 136.0,633.5 138.2,632.7 140.4,633.5 142.6,632.7 144.8,633.3 147.0,634.3 149.2,632.7 151.4,633.7 153.6,632.7 155.8,633.7 158.0,634.1 160.2,634.3 162.4,633.5 164.6,634.1 166.8,633.5 169.0,634.1 171.2,634.1 173.4,633.5 175.6,634.3 177.8,634.1 180.0,633.3 182.2,633.7 184.4,632.7 186.6,632.7 188.8,633.3 194.5,631.8 200.0,631.5 206.0,630.8 213.2,630.0 219.0,628.8 224.9,627.1 231.0,625.5 236.6,623.6 241.0,621.0 244.0,620.0 246.0,618.9 248.5,619.0 251.0,616.4 260.4,610.6 269.8,600.0 278.0,589.5 286.2,573.1 292.0,556.7 296.7,540.3 301.4,521.5 305.4,500.4 308.4,484.0 310.3,475.4 315.7,430.1 319.6,398.9 322.4,377.0 323.2,367.0 324.5,349.8 326.5,326.4 328.5,306.8 331.4,273.6 333.3,250.2 334.6,232.6 336.2,217.0 337.4,198.3 339.0,179.5 340.9,162.3 343.2,145.1 345.6,134.2 347.5,128.5 349.0,126.4 350.5,128.0 351.8,131.8 354.2,145.1 356.5,162.3 358.8,179.5 360.4,198.3 362.0,217.0 364.0,236.5 365.6,258.0 366.9,277.5 368.5,299.0 370.4,324.4 372.4,345.9 374.4,367.0 375.1,377.0 377.4,398.9 380.6,430.1 385.3,475.4 387.0,477.0 390.5,498.1 394.0,516.8 397.5,535.6 401.0,552.0 404.5,563.7 408.0,574.3 412.7,584.8 417.4,593.0 422.1,601.2 429.1,610.6 437.3,618.8 439.0,618.0 440.5,620.5 445.5,624.2 454.9,628.9 460.0,631.0 464.0,631.7 467.9,633.1 470.0,632.5 472.8,634.3 475.7,633.7 477.7,635.2 492.3,635.2 493.7,633.3 495.3,635.2 498.2,634.3 503.1,629.8 508.9,622.9 512.8,615.1 516.7,607.3 520.6,600.5 524.5,592.7 528.5,588.8 531.4,586.8 535.3,585.8 539.2,586.4 543.1,587.4 548.0,587.2 550.9,589.7 552.9,588.2 557.8,590.1 560.7,589.3 564.6,590.1 567.5,585.8 571.4,582.9 576.3,580.4 581.2,578.6 585.0,579.0 589.0,578.6 593.9,580.9 598.8,581.9 602.7,584.9 607.6,587.8 611.5,590.1 614.4,587.4 620.3,585.2 626.1,582.9 633.9,580.6 642.7,580.4 649.5,581.9 657.4,582.5 664.0,581.4 672.8,578.6 680.4,578.6 683.7,580.8 691.3,581.8 696.8,584.0 701.2,587.3 704.5,591.7 707.8,602.6 711.0,615.8 714.3,626.7 717.6,634.4 720.4,636.5 724.2,635.4 728.5,632.2 731.8,630.0 736.2,631.1 740.6,633.9 744.9,635.0 747.0,633.5 751.5,633.9 758.1,631.5 763.5,631.5 766.8,633.9 769.0,634.6 771.3,633.8 773.6,634.2 775.9,634.0 778.2,634.6 780.5,633.5 782.8,634.0 785.1,633.5 787.4,634.2 789.7,634.6 792.0,634.8 794.3,633.5 796.6,634.6 798.9,634.8 801.2,634.2 803.5,634.8 805.8,634.8 808.1,634.6 810.4,634.8 812.7,633.8 815.0,634.2 817.3,634.0 819.6,633.2 821.9,633.5 824.2,634.2 826.5,634.8 828.8,634.0 831.1,634.0 833.4,633.8 835.7,634.0 838.0,633.5 840.3,634.2 842.6,634.8 844.9,634.8 847.2,634.8 849.5,633.2 851.8,634.0 854.1,634.0 856.4,633.8 858.7,634.0 861.0,633.5 863.3,634.8 865.6,634.2 867.9,634.2 869.5,633.7" fill="none" stroke="#ffff00" stroke-width="1" shape-rendering="crispEdges"/>
<polyline points="24.5,344.5 25.5,344.5 26.5,279.3 27.5,204.0 28.5,204.0 29.5,285.1 30.5,344.5 31.5,344.5 32.5,247.6 33.5,204.0 34.5,204.0 35.5,316.3 36.5,344.5 37.5,344.5 38.5,217.4 39.5,204.0 40.5,207.1 41.5,344.5 42.5,344.5 43.5,327.2 44.5,204.0 45.5,204.0 46.5,236.3 47.5,344.5 48.5,344.5 49.5,296.6 50.5,204.0 51.5,204.0 52.5,267.7 53.5,344.5 54.5,344.5 55.5,264.8 56.5,204.0 57.5,204.0 58.5,299.5 59.5,344.5 60.5,344.5 61.5,233.6 62.5,204.0 63.5,204.0 64.5,329.8 65.5,344.5 66.5,342.7 67.5,204.6 68.5,204.0 69.5,220.0 70.5,344.5 71.5,344.5 72.5,313.6 73.5,204.0 74.5,204.0 75.5,250.4 76.5,344.5 77.5,344.5 78.5,282.2 79.5,204.0 80.5,204.0 81.5,282.2 82.5,344.5 83.5,344.5 84.5,250.4 85.5,204.0 86.5,204.0 87.5,313.6 88.5,344.5 89.5,344.5 90.5,220.0 91.5,204.0 92.5,204.6 93.5,342.7 94.5,344.5 95.5,329.8 96.5,204.0 97.5,204.0 98.5,233.6 99.5,344.5 100.5,344.5 101.5,299.5 102.5,204.0 103.5,204.0 104.5,264.8 105.5,344.5 106.5,344.5 107.5,267.7 108.5,204.0 109.5,204.0 110.5,296.6 111.5,344.5 112.5,344.5 113.5,236.3 114.5,204.0 115.5,204.0 116.5,327.2 117.5,344.5 118.5,344.5 119.5,207.1 120.5,204.0 121.5,217.4 122.5,344.5 123.5,344.5 124.5,316.3 125.5,204.0 126.5,204.0 127.5,247.6 128.5,344.5 129.5,344.5 130.5,285.1 131.5,204.0 132.5,204.0 133.5,279.3 134.5,344.5 135.5,344.5 136.5,253.3 137.5,204.0 138.5,204.0 139.5,310.8 140.5,344.5 141.5,344.5 142.5,222.7 143.5,204.0 144.5,204.0 145.5,340.1 146.5,344.5 147.5,332.4 148.5,204.0 149.5,204.0 150.5,230.8 151.5,344.5 152.5,344.5 153.5,302.3 154.5,204.0 155.5,204.0 156.5,261.9 157.5,344.5 158.5,344.5 159.5,270.6 160.5,204.0 161.5,204.0 162.5,293.8 163.5,344.5 164.5,344.5 165.5,239.1 166.5,204.0 167.5,204.0 168.5,324.5 169.5,344.5 170.5,344.5 171.5,209.6 172.5,204.0 173.5,214.8 174.5,344.5 175.5,344.5 176.5,319.1 177.5,204.0 178.5,204.0 179.5,244.8 180.5,344.5 181.5,344.5 182.5,288.0 183.5,204.0 184.5,204.0 185.5,276.4 186.5,344.5 187.5,344.5 188.5,256.2 189.5,204.0 190.5,204.0 191.5,308.0 192.5,344.5 193.5,344.5 194.5,225.4 195.5,204.0 196.5,204.0 197.5,337.6 198.5,344.5 199.5,335.0 200.5,204.0 201.5,204.0 202.5,228.1 203.5,344.5 204.5,344.5 205.5,305.2 206.5,204.0 207.5,204.0 208.5,259.0 209.5,344.5 210.5,344.5 211.5,273.5 212.5,204.0 213.5,204.0 214.5,290.9 215.5,344.5 216.5,344.5 217.5,241.9 218.5,204.0 219.5,204.0 220.5,321.8 221.5,344.5 222.5,344.5 223.5,212.2 224.5,204.0 225.5,212.2 226.5,344.5 227.5,332.0 228.5,344.5 230.6,318.9 232.7,297.4 234.9,282.3 237.0,271.6 238.5,247.9 239.8,217.8 240.7,204.0 241.5,204.0 242.5,204.0 243.5,237.6 244.5,344.5 245.5,344.5 246.5,299.2 247.5,204.0 248.5,204.0 249.5,261.2 250.5,344.5 251.5,344.5 252.5,275.4 253.5,204.0 254.5,204.0 255.5,285.1 256.5,344.5 257.5,344.5 258.5,251.5 259.5,204.0 260.5,204.0 261.5,308.8 262.5,344.5 263.5,344.5 264.5,228.3 265.5,204.0 266.5,204.0 267.5,331.3 268.5,344.5 269.5,343.5 270.5,206.6 271.5,204.0 272.5,215.5 273.5,344.5 274.5,344.5 275.5,322.0 276.5,204.0 277.5,204.0 278.5,237.9 279.5,344.5 280.5,344.5 281.5,298.9 282.5,204.0 283.5,204.0 284.5,261.4 285.5,344.5 286.5,344.5 287.5,275.1 288.5,204.0 289.5,204.0 290.5,285.4 291.5,344.5 292.5,344.5 293.5,251.2 294.5,204.0 295.5,204.0 296.5,309.0 297.5,344.5 298.5,344.5 299.5,228.0 300.5,204.0 301.5,204.0 302.5,331.5 303.5,344.5 304.5,343.3 305.5,206.4 306.5,204.0 307.5,215.7 308.5,344.5 309.5,344.5 310.5,321.7 311.5,204.0 312.5,204.0 313.5,238.2 314.5,344.5 315.5,344.5 316.5,298.7 317.5,204.0 318.5,204.0 319.5,261.7 320.5,344.5 321.5,344.5 322.5,274.8 323.5,204.0 324.5,204.0 325.5,285.7 326.5,344.5 327.5,344.5 328.5,250.9 329.5,204.0 330.5,204.0 331.5,309.3 332.5,344.5 333.5,344.5 334.5,227.8 335.5,204.0 336.5,204.0 337.5,331.8 338.5,344.5 339.5,343.1 340.5,206.1 341.5,204.0 342.5,216.0 343.5,344.5 344.5,344.5 345.5,321.5 346.5,204.0 347.5,204.0 348.5,238.4 349.5,344.5 350.5,344.5 351.5,298.4 352.5,204.0 353.5,204.0 354.5,262.0 355.5,344.5 356.5,344.5 357.5,274.5 358.5,204.0 359.5,204.0 360.5,286.0 361.5,344.5 362.5,344.5 363.5,250.6 364.5,204.0 365.5,204.0 366.5,309.6 367.5,344.5 368.5,344.5 369.5,227.5 370.5,204.0 371.5,204.0 372.5,332.0 373.5,344.5 374.5,342.8 375.5,205.9 376.5,204.0 377.5,216.3 378.5,344.5 379.5,344.5 380.5,321.2 381.5,204.0 382.5,204.0 383.5,238.7 384.5,344.5 385.5,344.5 386.5,298.1 387.5,204.0 388.5,204.0 389.5,262.3 390.5,344.5 391.5,344.5 392.5,274.2 393.5,204.0 394.5,204.0 395.5,286.3 396.5,344.5 397.5,344.5 398.5,250.3 399.5,204.0 400.5,204.0 401.5,309.9 402.5,344.5 403.5,344.5 404.5,227.2 405.5,204.0 406.5,204.0 407.5,332.3 408.5,344.5 409.5,342.6 410.5,205.6 411.5,204.0 412.5,216.5 413.5,344.5 414.5,344.5 415.5,320.9 416.5,204.0 417.5,204.0 418.5,239.0 419.5,344.5 420.5,344.5 421.5,297.8 422.5,204.0 423.5,204.0 424.5,262.6 425.5,344.5 426.5,344.5 427.5,273.9 428.5,204.0 429.5,204.0 430.5,286.6 431.5,344.5 432.5,344.5 433.5,250.1 434.5,204.0 435.5,204.0 436.5,310.1 437.5,344.5 438.5,344.5 439.5,227.0 440.5,204.0 441.5,204.0 442.5,332.6 443.5,344.5 444.5,342.3 445.5,205.4 446.5,204.0 447.5,216.8 448.5,344.5 449.5,344.5 450.5,320.7 451.5,204.0 452.5,204.0 453.5,239.3 454.5,344.5 455.5,344.5 456.5,297.5 457.5,204.0 458.5,204.0 459.5,262.9 460.5,344.5 461.5,344.5 462.5,273.6 463.5,204.0 464.5,204.0 465.5,286.8 466.5,344.5 467.5,344.5 468.5,249.8 469.5,204.0 470.5,204.0 471.5,310.4 472.5,344.5 473.5,344.5 474.5,226.7 475.5,204.0 476.5,204.0 477.5,332.8 478.5,344.5 479.5,342.1 480.5,205.1 481.5,204.0 482.5,217.0 483.5,344.5 484.5,344.5 485.5,320.4 486.5,204.0 487.5,204.0 488.5,239.5 489.5,344.5 490.5,344.5 491.5,297.2 492.5,204.0 493.5,204.0 494.5,263.2 495.5,344.5 496.5,344.5 497.5,273.4 498.5,204.0 499.5,204.0 500.5,287.1 501.5,344.5 502.5,344.5 503.5,249.5 504.5,204.0 505.5,204.0 506.5,310.7 507.5,344.5 508.5,344.5 509.5,226.4 510.5,204.0 511.5,204.0 512.5,333.1 513.5,344.5 514.5,341.8 515.5,204.9 516.5,204.0 517.5,217.3 518.5,344.5 519.5,344.5 520.5,320.1 521.5,204.0 522.5,204.0 523.5,239.8 524.5,344.5 525.5,344.5 526.5,297.0 527.5,204.0 528.5,204.0 529.5,263.4 530.5,344.5 531.5,344.5 532.5,273.1 533.5,204.0 534.5,204.0 535.5,287.4 536.5,344.5 537.5,344.5 538.5,249.2 539.5,204.0 540.5,204.0 541.5,311.0 542.5,344.5 543.5,344.5 544.5,226.1 545.5,204.0 546.5,204.0 547.5,333.3 548.5,344.5 549.5,341.6 550.5,204.6 551.5,204.0 552.5,217.6 553.5,344.5 554.5,344.5 555.5,319.9 556.5,204.0 557.5,204.0 558.5,240.1 559.5,344.5 560.5,344.5 561.5,296.7 562.5,204.0 563.5,204.0 564.5,263.7 565.5,344.5 566.5,344.5 567.5,272.8 568.5,204.0 569.5,204.0 570.5,287.7 571.5,344.5 572.5,344.5 573.5,248.9 574.5,204.0 575.5,204.0 576.5,332.0 577.5,344.5 579.6,318.9 581.7,297.4 583.9,282.3 586.0,271.6 587.8,247.9 589.3,217.8 590.4,204.0 591.5,204.0 592.5,204.0 593.5,267.0 594.5,344.5 595.5,344.5 596.5,267.0 597.5,204.0 598.5,204.0 599.5,295.8 600.5,344.5 601.5,344.5 602.5,238.5 603.5,204.0 604.5,204.0 605.5,323.7 606.5,344.5 607.5,344.5 608.5,211.7 609.5,204.0 610.5,211.7 611.5,344.5 612.5,344.5 613.5,323.7 614.5,204.0 615.5,204.0 616.5,238.5 617.5,344.5 618.5,344.5 619.5,295.8 620.5,204.0 621.5,204.0 622.5,267.0 623.5,344.5 624.5,344.5 625.5,267.0 626.5,204.0 627.5,204.0 628.5,295.8 629.5,344.5 630.5,344.5 631.5,238.5 632.5,204.0 633.5,204.0 634.5,323.7 635.5,344.5 636.5,344.5 637.5,211.7 638.5,204.0 639.5,211.7 640.5,344.5 641.5,344.5 642.5,323.7 643.5,204.0 644.5,204.0 645.5,238.5 646.5,344.5 647.5,344.5 648.5,295.8 649.5,204.0 650.5,204.0 651.5,267.0 652.5,344.5 653.5,344.5 654.5,267.0 655.5,204.0 656.5,204.0 657.5,295.8 658.5,344.5 659.5,344.5 660.5,238.5 661.5,204.0 662.5,204.0 663.5,323.7 664.5,344.5 665.5,344.5 666.5,211.7 667.5,204.0 668.5,211.7 669.5,344.5 670.5,344.5 671.5,323.7 672.5,204.0 673.5,204.0 674.5,238.5 675.5,344.5 676.5,344.5 677.5,295.8 678.5,204.0 679.5,204.0 680.5,267.0 681.5,344.5 682.5,344.5 683.5,267.0 684.5,204.0 685.5,204.0 686.5,295.8 687.5,344.5 688.5,344.5 689.5,238.5 690.5,204.0 691.5,204.0 692.5,323.7 693.5,344.5 694.5,344.5 695.5,211.7 696.5,204.0 697.5,211.7 698.5,344.5 699.5,344.5 700.5,323.7 701.5,204.0 702.5,204.0 703.5,238.5 704.5,344.5 705.5,344.5 706.5,295.8 707.5,204.0 708.5,204.0 709.5,267.0 710.5,344.5 711.5,344.5 712.5,267.0 713.5,204.0 714.5,204.0 715.5,295.8 716.5,344.5 717.5,344.5 718.5,238.5 719.5,204.0 720.5,204.0 721.5,323.7 722.5,344.5 723.5,344.5 724.5,211.7 725.5,204.0 726.5,211.7 727.5,344.5 728.5,344.5 729.5,323.7 730.5,204.0 731.5,204.0 732.5,238.5 733.5,344.5 734.5,344.5 735.5,295.8 736.5,204.0 737.5,204.0 738.5,267.0 739.5,344.5 740.5,344.5 741.5,267.0 742.5,204.0 743.5,204.0 744.5,295.8 745.5,344.5 746.5,344.5 747.5,238.5 748.5,204.0 749.5,204.0 750.5,323.7 751.5,344.5 752.5,344.5 753.5,211.7 754.5,204.0 755.5,211.7 756.5,344.5 757.5,344.5 758.5,323.7 759.5,204.0 760.5,204.0 761.5,238.5 762.5,344.5 763.5,344.5 764.5,295.8 765.5,204.0 766.5,204.0 767.5,267.0 768.5,344.5 769.5,344.5 770.5,267.0 771.5,204.0 772.5,204.0 773.5,295.8 774.5,344.5 775.5,344.5 776.5,238.5 777.5,204.0 778.5,204.0 779.5,323.7 780.5,344.5 781.5,344.5 782.5,211.7 783.5,204.0 784.5,211.7 785.5,344.5 786.5,344.5 787.5,323.7 788.5,204.0 789.5,204.0 790.5,238.5 791.5,344.5 792.5,344.5 793.5,295.8 794.5,204.0 795.5,204.0 796.5,267.0 797.5,344.5 798.5,344.5 799.5,267.0 800.5,204.0 801.5,204.0 802.5,295.8 803.5,344.5 804.5,344.5 805.5,238.5 806.5,204.0 807.5,204.0 808.5,323.7 809.5,344.5 810.5,344.5 811.5,211.7 812.5,204.0 813.5,211.7 814.5,344.5 815.5,344.5 816.5,323.7 817.5,204.0 818.5,204.0 819.5,238.5 820.5,344.5 821.5,344.5 822.5,295.8 823.5,204.0 824.5,204.0 825.5,267.0 826.5,344.5 827.5,344.5 828.5,267.0 829.5,204.0 830.5,204.0 831.5,295.8 832.5,344.5 833.5,344.5 834.5,238.5 835.5,204.0 836.5,204.0 837.5,323.7 838.5,344.5 839.5,344.5 840.5,211.7 841.5,204.0 842.5,211.7 843.5,344.5 844.5,344.5 845.5,323.7 846.5,204.0 847.5,204.0 848.5,238.5 849.5,344.5 850.5,344.5 851.5,295.8 852.5,204.0 853.5,204.0 854.5,267.0 855.5,344.5 856.5,344.5 857.5,267.0 858.5,204.0 859.5,204.0 860.5,295.8 861.5,344.5 862.5,344.5 863.5,238.5 864.5,204.0 865.5,204.0 866.5,323.7 867.5,344.5 868.5,344.5 869.5,211.7" fill="none" stroke="#ff0000" stroke-width="1" shape-rendering="crispEdges"/>
<line x1="24" y1="273.5" x2="870" y2="273.5" stroke="#c80000" shape-rendering="crispEdges"/>
<line x1="49.5" y1="1" x2="49.5" y2="615" stroke="#000" shape-rendering="crispEdges"/>
<line x1="49.5" y1="1" x2="49.5" y2="615" stroke="#c8c8c8" shape-rendering="crispEdges"/>
<g fill="#000" shape-rendering="crispEdges"><rect x="49" y="5" width="1" height="1"/><rect x="49" y="10" width="1" height="1"/><rect x="49" y="15" width="1" height="1"/><rect x="49" y="20" width="1" height="1"/><rect x="49" y="25" width="1" height="1"/><rect x="49" y="30" width="1" height="1"/><rect x="49" y="35" width="1" height="1"/><rect x="49" y="40" width="1" height="1"/><rect x="49" y="45" width="1" height="1"/><rect x="49" y="50" width="1" height="1"/><rect x="49" y="55" width="1" height="1"/><rect x="49" y="60" width="1" height="1"/><rect x="49" y="65" width="1" height="1"/><rect x="49" y="70" width="1" height="1"/><rect x="49" y="75" width="1" height="1"/><rect x="49" y="80" width="1" height="1"/><rect x="49" y="85" width="1" height="1"/><rect x="49" y="90" width="1" height="1"/><rect x="49" y="95" width="1" height="1"/><rect x="49" y="100" width="1" height="1"/><rect x="49" y="105" width="1" height="1"/><rect x="49" y="110" width="1" height="1"/><rect x="49" y="115" width="1" height="1"/><rect x="49" y="120" width="1" height="1"/><rect x="49" y="125" width="1" height="1"/><rect x="49" y="130" width="1" height="1"/><rect x="49" y="135" width="1" height="1"/><rect x="49" y="140" width="1" height="1"/><rect x="49" y="145" width="1" height="1"/><rect x="49" y="150" width="1" height="1"/><rect x="49" y="155" width="1" height="1"/><rect x="49" y="160" width="1" height="1"/><rect x="49" y="165" width="1" height="1"/><rect x="49" y="170" width="1" height="1"/><rect x="49" y="175" width="1" height="1"/><rect x="49" y="180" width="1" height="1"/><rect x="49" y="185" width="1" height="1"/><rect x="49" y="190" width="1" height="1"/><rect x="49" y="195" width="1" height="1"/><rect x="49" y="200" width="1" height="1"/><rect x="49" y="205" width="1" height="1"/><rect x="49" y="210" width="1" height="1"/><rect x="49" y="215" width="1" height="1"/><rect x="49" y="220" width="1" height="1"/><rect x="49" y="225" width="1" height="1"/><rect x="49" y="230" width="1" height="1"/><rect x="49" y="235" width="1" height="1"/><rect x="49" y="240" width="1" height="1"/><rect x="49" y="245" width="1" height="1"/><rect x="49" y="250" width="1" height="1"/><rect x="49" y="255" width="1" height="1"/><rect x="49" y="260" width="1" height="1"/><rect x="49" y="265" width="1" height="1"/><rect x="49" y="270" width="1" height="1"/><rect x="49" y="275" width="1" height="1"/><rect x="49" y="280" width="1" height="1"/><rect x="49" y="285" width="1" height="1"/><rect x="49" y="290" width="1" height="1"/><rect x="49" y="295" width="1" height="1"/><rect x="49" y="300" width="1" height="1"/><rect x="49" y="305" width="1" height="1"/><rect x="49" y="310" width="1" height="1"/><rect x="49" y="315" width="1" height="1"/><rect x="49" y="320" width="1" height="1"/><rect x="49" y="325" width="1" height="1"/><rect x="49" y="330" width="1" height="1"/><rect x="49" y="335" width="1" height="1"/><rect x="49" y="340" width="1" height="1"/><rect x="49" y="345" width="1" height="1"/><rect x="49" y="350" width="1" height="1"/><rect x="49" y="355" width="1" height="1"/><rect x="49" y="360" width="1" height="1"/><rect x="49" y="365" width="1" height="1"/><rect x="49" y="370" width="1" height="1"/><rect x="49" y="375" width="1" height="1"/><rect x="49" y="380" width="1" height="1"/><rect x="49" y="385" width="1" height="1"/><rect x="49" y="390" width="1" height="1"/><rect x="49" y="395" width="1" height="1"/><rect x="49" y="400" width="1" height="1"/><rect x="49" y="405" width="1" height="1"/><rect x="49" y="410" width="1" height="1"/><rect x="49" y="415" width="1" height="1"/><rect x="49" y="420" width="1" height="1"/><rect x="49" y="425" width="1" height="1"/><rect x="49" y="430" width="1" height="1"/><rect x="49" y="435" width="1" height="1"/><rect x="49" y="440" width="1" height="1"/><rect x="49" y="445" width="1" height="1"/><rect x="49" y="450" width="1" height="1"/><rect x="49" y="455" width="1" height="1"/><rect x="49" y="460" width="1" height="1"/><rect x="49" y="465" width="1" height="1"/><rect x="49" y="470" width="1" height="1"/><rect x="49" y="475" width="1" height="1"/><rect x="49" y="480" width="1" height="1"/><rect x="49" y="485" width="1" height="1"/><rect x="49" y="490" width="1" height="1"/><rect x="49" y="495" width="1" height="1"/><rect x="49" y="500" width="1" height="1"/><rect x="49" y="505" width="1" height="1"/><rect x="49" y="510" width="1" height="1"/><rect x="49" y="515" width="1" height="1"/><rect x="49" y="520" width="1" height="1"/><rect x="49" y="525" width="1" height="1"/><rect x="49" y="530" width="1" height="1"/><rect x="49" y="535" width="1" height="1"/><rect x="49" y="540" width="1" height="1"/><rect x="49" y="545" width="1" height="1"/><rect x="49" y="550" width="1" height="1"/><rect x="49" y="555" width="1" height="1"/><rect x="49" y="560" width="1" height="1"/><rect x="49" y="565" width="1" height="1"/><rect x="49" y="570" width="1" height="1"/><rect x="49" y="575" width="1" height="1"/><rect x="49" y="580" width="1" height="1"/><rect x="49" y="585" width="1" height="1"/><rect x="49" y="590" width="1" height="1"/><rect x="49" y="595" width="1" height="1"/><rect x="49" y="600" width="1" height="1"/></g>
<line x1="49.5" y1="265" x2="49.5" y2="341" stroke="#50c0c0" shape-rendering="crispEdges"/>
<polyline points="24.0,476.5 343.5,476.5 344.5,405.5 347.5,405.5 348.5,476.5 693.5,476.5 694.5,405.5 697.5,405.5 698.5,476.5 870.0,476.5" fill="none" stroke="#ff0000" stroke-width="1" shape-rendering="crispEdges"/>
<polyline points="24.5,18.0 26.9,41.5 30.0,57.5 32.3,51.0 35.6,27.5 39.3,18.8 41.2,20.4 44.5,39.0 46.8,49.7 49.2,53.3 51.5,46.2 53.8,44.6 56.2,47.4 58.5,60.3 60.9,83.7 63.2,104.8 65.6,116.0 67.4,114.2 70.2,95.4 73.0,83.7 74.5,81.8 76.3,87.2 79.2,107.2 80.4,117.0 82.0,126.4 83.5,137.3 85.1,146.7 87.1,151.1 89.8,148.3 92.1,146.4 94.5,149.0 96.8,159.2 99.2,168.6 101.2,176.4 103.1,179.2 104.9,176.4 107.0,168.6 109.3,159.2 111.7,156.5 113.7,157.9 115.6,165.4 117.9,177.9 120.3,187.3 122.1,189.7 124.2,190.1 125.7,185.8 128.1,181.8 130.4,180.3 132.4,181.8 134.3,187.3 136.2,192.0 137.9,194.3 139.8,192.8 141.7,187.3 143.7,179.5 145.6,171.7 147.6,164.7 149.6,162.3 151.5,163.9 153.4,168.6 155.4,171.4 157.0,172.0 159.3,169.3 161.2,163.9 163.2,157.6 165.6,151.4 167.4,148.3 169.5,151.4 171.8,156.8 174.2,159.7 175.7,154.5 177.3,143.6 178.5,132.6 179.6,123.3 180.4,102.5 182.7,67.3 185.1,43.9 187.4,22.8 189.8,8.7 191.6,4.7 194.0,7.5 196.3,22.8 199.1,43.9 201.5,60.3 204.3,67.8 206.6,63.8 209.7,50.9 212.7,40.4 215.1,37.5 217.4,40.4 220.2,49.7 223.7,60.3 227.3,74.3 230.8,90.7 234.3,107.2 237.1,113.5 239.5,111.8 242.5,103.6 245.2,100.1 248.0,104.8 250.3,117.0 251.8,126.4 253.4,135.8 255.3,145.1 257.3,152.2 259.6,156.1 262.8,159.2 265.9,163.9 269.0,170.9 272.1,177.2 274.5,178.7 276.5,177.9 278.4,171.7 281.5,167.8 284.3,170.1 286.2,177.2 288.5,185.8 290.9,192.0 294.0,195.1 297.1,193.6 299.5,190.4 301.0,188.6 303.4,191.2 305.7,194.3 308.4,197.0 310.4,195.1 312.4,194.3 314.3,187.3 316.7,177.9 319.0,171.7 321.3,169.3 323.7,170.1 326.0,174.0 328.4,177.2 330.7,177.2 332.3,171.7 334.6,165.4 337.0,160.8 340.1,157.6 343.2,158.4 345.3,158.4 346.8,148.3 348.4,137.3 349.5,125.5 351.2,100.1 352.8,76.7 354.7,53.2 356.6,32.2 358.2,13.4 360.1,2.9 362.2,0.5 364.5,2.9 366.4,13.4 368.8,32.2 371.1,55.6 373.4,72.0 375.3,77.4 377.4,72.0 379.8,55.6 382.1,39.2 384.0,31.7 385.9,30.3 388.0,34.5 390.3,50.9 393.4,69.7 396.9,86.1 400.4,102.5 403.9,116.5 406.3,123.6 408.3,126.4 410.2,123.6 413.3,114.2 416.3,109.5 419.1,113.0 420.6,118.0 422.4,126.4 424.3,138.9 426.7,154.5 429.0,165.4 431.3,170.9 434.5,174.0 437.6,174.8 441.5,177.2 444.6,179.5 447.8,181.8 450.1,178.7 452.4,172.5 455.6,169.3 457.9,172.5 459.9,181.1 461.8,188.9 464.2,195.1 466.5,198.3 468.4,199.5 470.4,197.5 472.8,193.6 475.1,190.8 477.4,192.8 480.3,194.3 482.9,192.0 485.3,187.3 487.6,178.7 489.9,171.7 492.3,167.0 494.6,164.3 497.0,166.2 499.3,170.1 501.7,172.9 504.0,170.1 506.3,167.8 508.7,163.1 511.0,160.0 513.4,158.4 515.7,159.2 517.8,160.0 519.6,156.1 521.2,148.3 522.4,140.4 523.5,131.1 524.5,122.0 526.7,100.1 529.1,76.7 531.4,57.9 533.8,41.5 536.1,27.5 538.4,18.1 541.5,13.9 543.8,18.1 546.2,34.5 548.5,55.6 550.9,72.0 553.0,77.9 555.3,72.0 557.7,57.9 560.0,42.7 562.4,35.7 564.9,36.8 567.3,47.4 569.6,62.6 572.0,76.7 574.3,81.4 577.1,84.9 579.5,88.4 582.3,97.8 585.3,108.3 588.1,116.5 591.2,114.2 593.5,110.7 595.4,108.3 598.2,114.2 599.6,119.0 601.2,126.4 603.1,137.3 604.9,148.3 607.4,157.6 609.6,162.3 612.4,161.5 614.8,162.6 617.1,163.1 619.5,167.0 621.8,171.7 624.2,176.1 626.5,176.1 629.3,172.5 632.4,169.8 635.1,171.7 637.1,178.7 639.0,185.8 641.3,193.6 643.7,197.5 645.3,199.0 647.6,195.1 649.6,190.4 651.5,188.1 653.4,182.6 655.4,186.5 657.8,189.7 660.6,192.0 663.2,190.1 665.6,184.2 667.9,176.4 670.3,170.1 673.4,167.3 675.7,170.1 678.1,174.8 681.2,179.2 683.5,174.8 685.9,169.3 688.2,160.8 690.6,152.2 692.1,146.7 694.5,141.2 696.8,135.8 698.7,131.8 699.9,124.8 701.2,117.0 702.6,103.5 705.4,80.7 708.3,57.8 711.1,33.1 713.0,17.9 714.9,5.6 716.2,-1.0 716.6,-8.0 721.9,-8.0 722.3,-1.0 723.5,10.3 725.4,29.3 727.3,44.5 729.2,55.0 731.1,52.1 733.0,44.5 735.4,31.2 737.7,21.7 739.6,17.5 741.5,20.8 743.4,32.2 745.3,41.7 747.2,48.3 748.8,52.1 750.7,45.5 753.5,40.7 755.8,44.5 757.7,55.9 759.6,73.0 761.5,88.3 763.4,103.5 765.9,113.9 767.8,109.2 770.0,94.0 772.3,84.5 774.4,82.6 776.3,85.4 778.2,97.8 780.5,116.8 781.9,126.4 783.5,137.3 785.0,145.1 787.4,148.3 789.7,146.7 792.4,144.8 794.4,146.7 796.4,154.5 798.3,163.9 800.7,171.7 803.3,177.2 805.3,171.7 807.7,163.1 809.6,156.8 811.6,154.2 813.9,156.8 815.8,163.9 817.8,174.0 820.2,183.4 822.5,189.3 824.9,185.8 827.2,182.6 829.9,179.5 832.4,182.6 835.0,188.1 837.7,191.7 840.2,188.1 842.4,182.6 844.4,173.3 846.4,167.0 849.1,161.5 851.4,164.7 853.8,168.6 856.9,171.4 859.3,168.6 861.6,162.3 863.6,155.3 865.5,151.4 867.5,150.1 869.4,152.2" fill="none" stroke="#ffffff" stroke-width="1" shape-rendering="crispEdges"/>
<rect x="0" y="124" width="1" height="1" fill="#000"/><g shape-rendering="crispEdges" fill="#fff"><rect x="5" y="121" width="2" height="1"/><rect x="3" y="122" width="4" height="1"/><rect x="5" y="123" width="2" height="1"/><rect x="5" y="124" width="2" height="1"/><rect x="5" y="125" width="2" height="1"/><rect x="5" y="126" width="2" height="1"/><rect x="5" y="127" width="2" height="1"/><rect x="5" y="128" width="2" height="1"/><rect x="5" y="129" width="2" height="1"/><rect x="5" y="130" width="2" height="1"/><rect x="10" y="126" width="11" height="1"/><rect x="13" y="123" width="2" height="7"/><rect x="15" y="124" width="2" height="5"/><rect x="17" y="125" width="2" height="3"/></g>
<rect x="0" y="274" width="1" height="1" fill="#000"/><g shape-rendering="crispEdges" fill="#ff0000"><rect x="7" y="271" width="2" height="1"/><rect x="6" y="272" width="3" height="1"/><rect x="5" y="273" width="4" height="1"/><rect x="5" y="274" width="1" height="1"/><rect x="7" y="274" width="2" height="1"/><rect x="4" y="275" width="2" height="1"/><rect x="7" y="275" width="2" height="1"/><rect x="4" y="276" width="1" height="1"/><rect x="7" y="276" width="2" height="1"/><rect x="3" y="277" width="6" height="1"/><rect x="3" y="278" width="6" height="1"/><rect x="7" y="279" width="2" height="1"/><rect x="7" y="280" width="2" height="1"/><rect x="10" y="276" width="11" height="1"/><rect x="13" y="273" width="2" height="7"/><rect x="15" y="274" width="2" height="5"/><rect x="17" y="275" width="2" height="3"/></g>
<rect x="0" y="474" width="1" height="1" fill="#000"/><g shape-rendering="crispEdges" fill="#ff0000"><rect x="4" y="471" width="4" height="1"/><rect x="3" y="472" width="2" height="1"/><rect x="7" y="472" width="2" height="1"/><rect x="7" y="473" width="2" height="1"/><rect x="7" y="474" width="2" height="1"/><rect x="6" y="475" width="2" height="1"/><rect x="5" y="476" width="2" height="1"/><rect x="4" y="477" width="2" height="1"/><rect x="3" y="478" width="2" height="1"/><rect x="3" y="479" width="6" height="1"/><rect x="3" y="480" width="6" height="1"/><rect x="10" y="476" width="11" height="1"/><rect x="13" y="473" width="2" height="7"/><rect x="15" y="474" width="2" height="5"/><rect x="17" y="475" width="2" height="3"/></g>
<rect x="44.5" y="626.5" width="11" height="11" rx="1.5" fill="none" stroke="#c8c8c8"/>
<text x="46.19999999999999" y="636" font-family="Liberation Sans" font-size="10" fill="#d8d8d8">A</text>
</g></svg>
<div class="a chk" style="left:1006px;top:63px;width:16px;height:639px"></div>
<div class="sbtn" style="left:1006px;top:64px;width:16px;height:16px"></div>
<div class="sbtn" style="left:1006px;top:686px;width:16px;height:16px"></div>
<div class="sbtn" style="left:1006px;top:383px;width:16px;height:12px"></div>
<svg style="left:1006px;top:64px" width="16" height="640" shape-rendering="crispEdges"><path d="M4 10h7l-3.5-4z" fill="#000"/><path d="M4 628h7l-3.5 4z" fill="#000"/></svg>
<div class="a chk" style="left:136px;top:702px;width:870px;height:16px"></div>
<div class="sbtn" style="left:136px;top:702px;width:16px;height:16px"></div>
<div class="sbtn" style="left:990px;top:702px;width:16px;height:16px"></div>
<div class="sbtn" style="left:158px;top:702px;width:102px;height:16px"></div>
<svg style="left:136px;top:702px" width="870" height="16" shape-rendering="crispEdges"><path d="M9 4v7l-4-3.5z" fill="#000"/><path d="M860 4v7l4-3.5z" fill="#000"/></svg>
<div class="a" style="left:1006px;top:702px;width:18px;height:16px;background:#d6d3ce"></div>
<div class="vl" style="left:1022px;top:63px;height:656px;background:#d6d3ce"></div>
<div class="vl" style="left:1023px;top:63px;height:656px;background:#fff"></div>
<div class="hl" style="left:0;top:719px;width:1024px;background:#fff"></div>
<div class="t" style="left:2px;top:725px;font-size:11px" id="st1">Закрыть панель</div>
<div class="sunk" style="left:662px;top:722px;width:319px;height:16px"></div>
<div class="t" style="left:664px;top:725px;font-size:11px;letter-spacing:0.1px" id="st2">Полн. время: 00:00:01:213.200, Тек. время: 00:00:00:009.000</div>
<div class="sunk" style="left:983px;top:722px;width:41px;height:16px"></div>
<div class="t" style="left:986px;top:725px;font-size:11px">1.48</div>
<div class="hl" style="left:0;top:739px;width:1024px;background:#fff"></div>
<div class="btn" style="left:2px;top:742px;width:51px;height:22px"></div>
<div class="t" style="left:21px;top:748px;font-size:11px;font-weight:bold;letter-spacing:0.3px">Пуск</div>
<svg style="left:5px;top:743px" width="16" height="16"><path d="M1 3q3-2 6 0l-1 5q-3-2-6 0z" fill="#e8442c"/><path d="M8 3.5q3 2 6 0l-1 5q-3 2-6 0z" fill="#3cb43c"/><path d="M0 9q3-2 6 0l-1 5q-3-2-6 0z" fill="#3a6cd8"/><path d="M7 9.5q3 2 6 0l-1 5q-3 2-6 0z" fill="#f4c020"/></svg>
<div class="btn" style="left:58px;top:742px;width:160px;height:22px"></div>
<svg style="left:62px;top:745px" width="16" height="16" shape-rendering="crispEdges"><path d="M3 1h7l3 3v11h-10z" fill="#f0d878" stroke="#a08030"/><path d="M5 1v14" stroke="#c8a848"/><path d="M6 2h3v12h-3z" fill="#fff0a0"/></svg>
<div class="t" style="left:81px;top:748px;font-size:11px;letter-spacing:0.5px">D:\автоскоп</div>
<div class="a chk" style="left:221px;top:742px;width:160px;height:22px;border:1px solid;border-color:#424142 #fff #fff #424142;box-shadow:inset 1px 1px 0 #848284"></div>
<svg style="left:226px;top:746px" width="16" height="16" shape-rendering="crispEdges"><rect x="1" y="1" width="15" height="1" fill="#000"/><rect x="1" y="2" width="1" height="1" fill="#000"/><rect x="2" y="2" width="12" height="1" fill="#008000"/><rect x="14" y="2" width="1" height="1" fill="#d6d3ce"/><rect x="15" y="2" width="1" height="1" fill="#000"/><rect x="1" y="3" width="1" height="1" fill="#000"/><rect x="2" y="3" width="1" height="1" fill="#008000"/><rect x="3" y="3" width="1" height="1" fill="#00f000"/><rect x="4" y="3" width="7" height="1" fill="#008000"/><rect x="11" y="3" width="1" height="1" fill="#00f000"/><rect x="12" y="3" width="2" height="1" fill="#008000"/><rect x="14" y="3" width="1" height="1" fill="#d6d3ce"/><rect x="15" y="3" width="1" height="1" fill="#000"/><rect x="1" y="4" width="1" height="1" fill="#000"/><rect x="2" y="4" width="2" height="1" fill="#00f000"/><rect x="4" y="4" width="6" height="1" fill="#008000"/><rect x="10" y="4" width="3" height="1" fill="#00f000"/><rect x="13" y="4" width="1" height="1" fill="#008000"/><rect x="14" y="4" width="1" height="1" fill="#d6d3ce"/><rect x="15" y="4" width="1" height="1" fill="#000"/><rect x="1" y="5" width="1" height="1" fill="#000"/><rect x="2" y="5" width="1" height="1" fill="#00f000"/><rect x="3" y="5" width="1" height="1" fill="#008000"/><rect x="4" y="5" width="1" height="1" fill="#00f000"/><rect x="5" y="5" width="5" height="1" fill="#008000"/><rect x="10" y="5" width="1" height="1" fill="#00f000"/><rect x="11" y="5" width="1" height="1" fill="#008000"/><rect x="12" y="5" width="1" height="1" fill="#00f000"/><rect x="13" y="5" width="1" height="1" fill="#008000"/><rect x="14" y="5" width="1" height="1" fill="#d6d3ce"/><rect x="15" y="5" width="1" height="1" fill="#000"/><rect x="1" y="6" width="1" height="1" fill="#000"/><rect x="2" y="6" width="1" height="1" fill="#008000"/><rect x="3" y="6" width="10" height="1" fill="#00f000"/><rect x="13" y="6" width="1" height="1" fill="#008000"/><rect x="14" y="6" width="1" height="1" fill="#d6d3ce"/><rect x="15" y="6" width="1" height="1" fill="#000"/><rect x="1" y="7" width="1" height="1" fill="#000"/><rect x="2" y="7" width="12" height="1" fill="#008000"/><rect x="14" y="7" width="1" height="1" fill="#d6d3ce"/><rect x="15" y="7" width="1" height="1" fill="#000"/><rect x="1" y="8" width="1" height="1" fill="#000"/><rect x="2" y="8" width="12" height="1" fill="#008000"/><rect x="14" y="8" width="1" height="1" fill="#d6d3ce"/><rect x="15" y="8" width="1" height="1" fill="#000"/><rect x="1" y="9" width="1" height="1" fill="#000"/><rect x="2" y="9" width="1" height="1" fill="#008000"/><rect x="3" y="9" width="1" height="1" fill="#00f000"/><rect x="4" y="9" width="2" height="1" fill="#008000"/><rect x="6" y="9" width="1" height="1" fill="#00f000"/><rect x="7" y="9" width="2" height="1" fill="#008000"/><rect x="9" y="9" width="1" height="1" fill="#00f000"/><rect x="10" y="9" width="4" height="1" fill="#008000"/><rect x="14" y="9" width="1" height="1" fill="#d6d3ce"/><rect x="15" y="9" width="1" height="1" fill="#000"/><rect x="1" y="10" width="1" height="1" fill="#000"/><rect x="2" y="10" width="1" height="1" fill="#008000"/><rect x="3" y="10" width="1" height="1" fill="#00f000"/><rect x="4" y="10" width="2" height="1" fill="#008000"/><rect x="6" y="10" width="1" height="1" fill="#00f000"/><rect x="7" y="10" width="2" height="1" fill="#008000"/><rect x="9" y="10" width="1" height="1" fill="#00f000"/><rect x="10" y="10" width="2" height="1" fill="#008000"/><rect x="12" y="10" width="1" height="1" fill="#00f000"/><rect x="13" y="10" width="1" height="1" fill="#008000"/><rect x="14" y="10" width="1" height="1" fill="#d6d3ce"/><rect x="15" y="10" width="1" height="1" fill="#000"/><rect x="1" y="11" width="1" height="1" fill="#000"/><rect x="2" y="11" width="2" height="1" fill="#00f000"/><rect x="4" y="11" width="1" height="1" fill="#008000"/><rect x="5" y="11" width="2" height="1" fill="#00f000"/><rect x="7" y="11" width="1" height="1" fill="#008000"/><rect x="8" y="11" width="2" height="1" fill="#00f000"/><rect x="10" y="11" width="1" height="1" fill="#008000"/><rect x="11" y="11" width="2" height="1" fill="#00f000"/><rect x="13" y="11" width="1" height="1" fill="#008000"/><rect x="14" y="11" width="1" height="1" fill="#d6d3ce"/><rect x="15" y="11" width="1" height="1" fill="#000"/><rect x="1" y="12" width="1" height="1" fill="#000"/><rect x="2" y="12" width="11" height="1" fill="#00f000"/><rect x="13" y="12" width="1" height="1" fill="#008000"/><rect x="14" y="12" width="1" height="1" fill="#d6d3ce"/><rect x="15" y="12" width="1" height="1" fill="#000"/><rect x="1" y="13" width="1" height="1" fill="#000"/><rect x="2" y="13" width="12" height="1" fill="#008000"/><rect x="14" y="13" width="1" height="1" fill="#d6d3ce"/><rect x="15" y="13" width="1" height="1" fill="#000"/><rect x="1" y="14" width="1" height="1" fill="#000"/><rect x="2" y="14" width="13" height="1" fill="#d6d3ce"/><rect x="15" y="14" width="1" height="1" fill="#000"/><rect x="1" y="15" width="15" height="1" fill="#000"/></svg>
<div class="t" style="left:245px;top:749px;font-size:11px;font-weight:bold;letter-spacing:0.23px">USB Осциллограф - D...</div>
<div class="a" style="left:917px;top:746px;width:16px;height:15px;background:#08246b"></div>
<div class="t" style="left:918px;top:748px;font-size:11px;color:#fff">RU</div>
<div class="vl" style="left:937px;top:742px;height:24px;background:#848284"></div><div class="vl" style="left:938px;top:742px;height:24px;background:#fff"></div>
<div class="sunk" style="left:942px;top:742px;width:80px;height:24px"></div>
<svg style="left:945px;top:745px" width="40" height="18">
<rect x="5.500" y="2.500" width="10" height="8" fill="#8a8a8a" stroke="#606060"/><rect x="8" y="11" width="6" height="1" fill="#707070"/>
<rect x="0.500" y="5.500" width="10" height="8" fill="#a8a8a8" stroke="#606060"/><path d="M1 6h4l-4 4z" fill="#c8c8c8"/><rect x="4" y="14" width="3" height="1" fill="#606060"/><rect x="2" y="15" width="7" height="1" fill="#707070"/>
<path d="M18.500 5.500h2.500l5.500-4.500v15l-5.500-4.500h-2.500z" fill="#fff" stroke="#606060"/><rect x="19" y="6" width="2" height="5" fill="#5070c8"/>
<path d="M27.500 6.500q1.500 2 0 4M29.500 4.500q3 4 0 8M31.500 3q4.500 5.500 0 11" stroke="#30b060" fill="none" stroke-width="1.300"/></svg>
<div class="t" style="left:985px;top:749px;font-size:11px">19:31</div></body></html>
